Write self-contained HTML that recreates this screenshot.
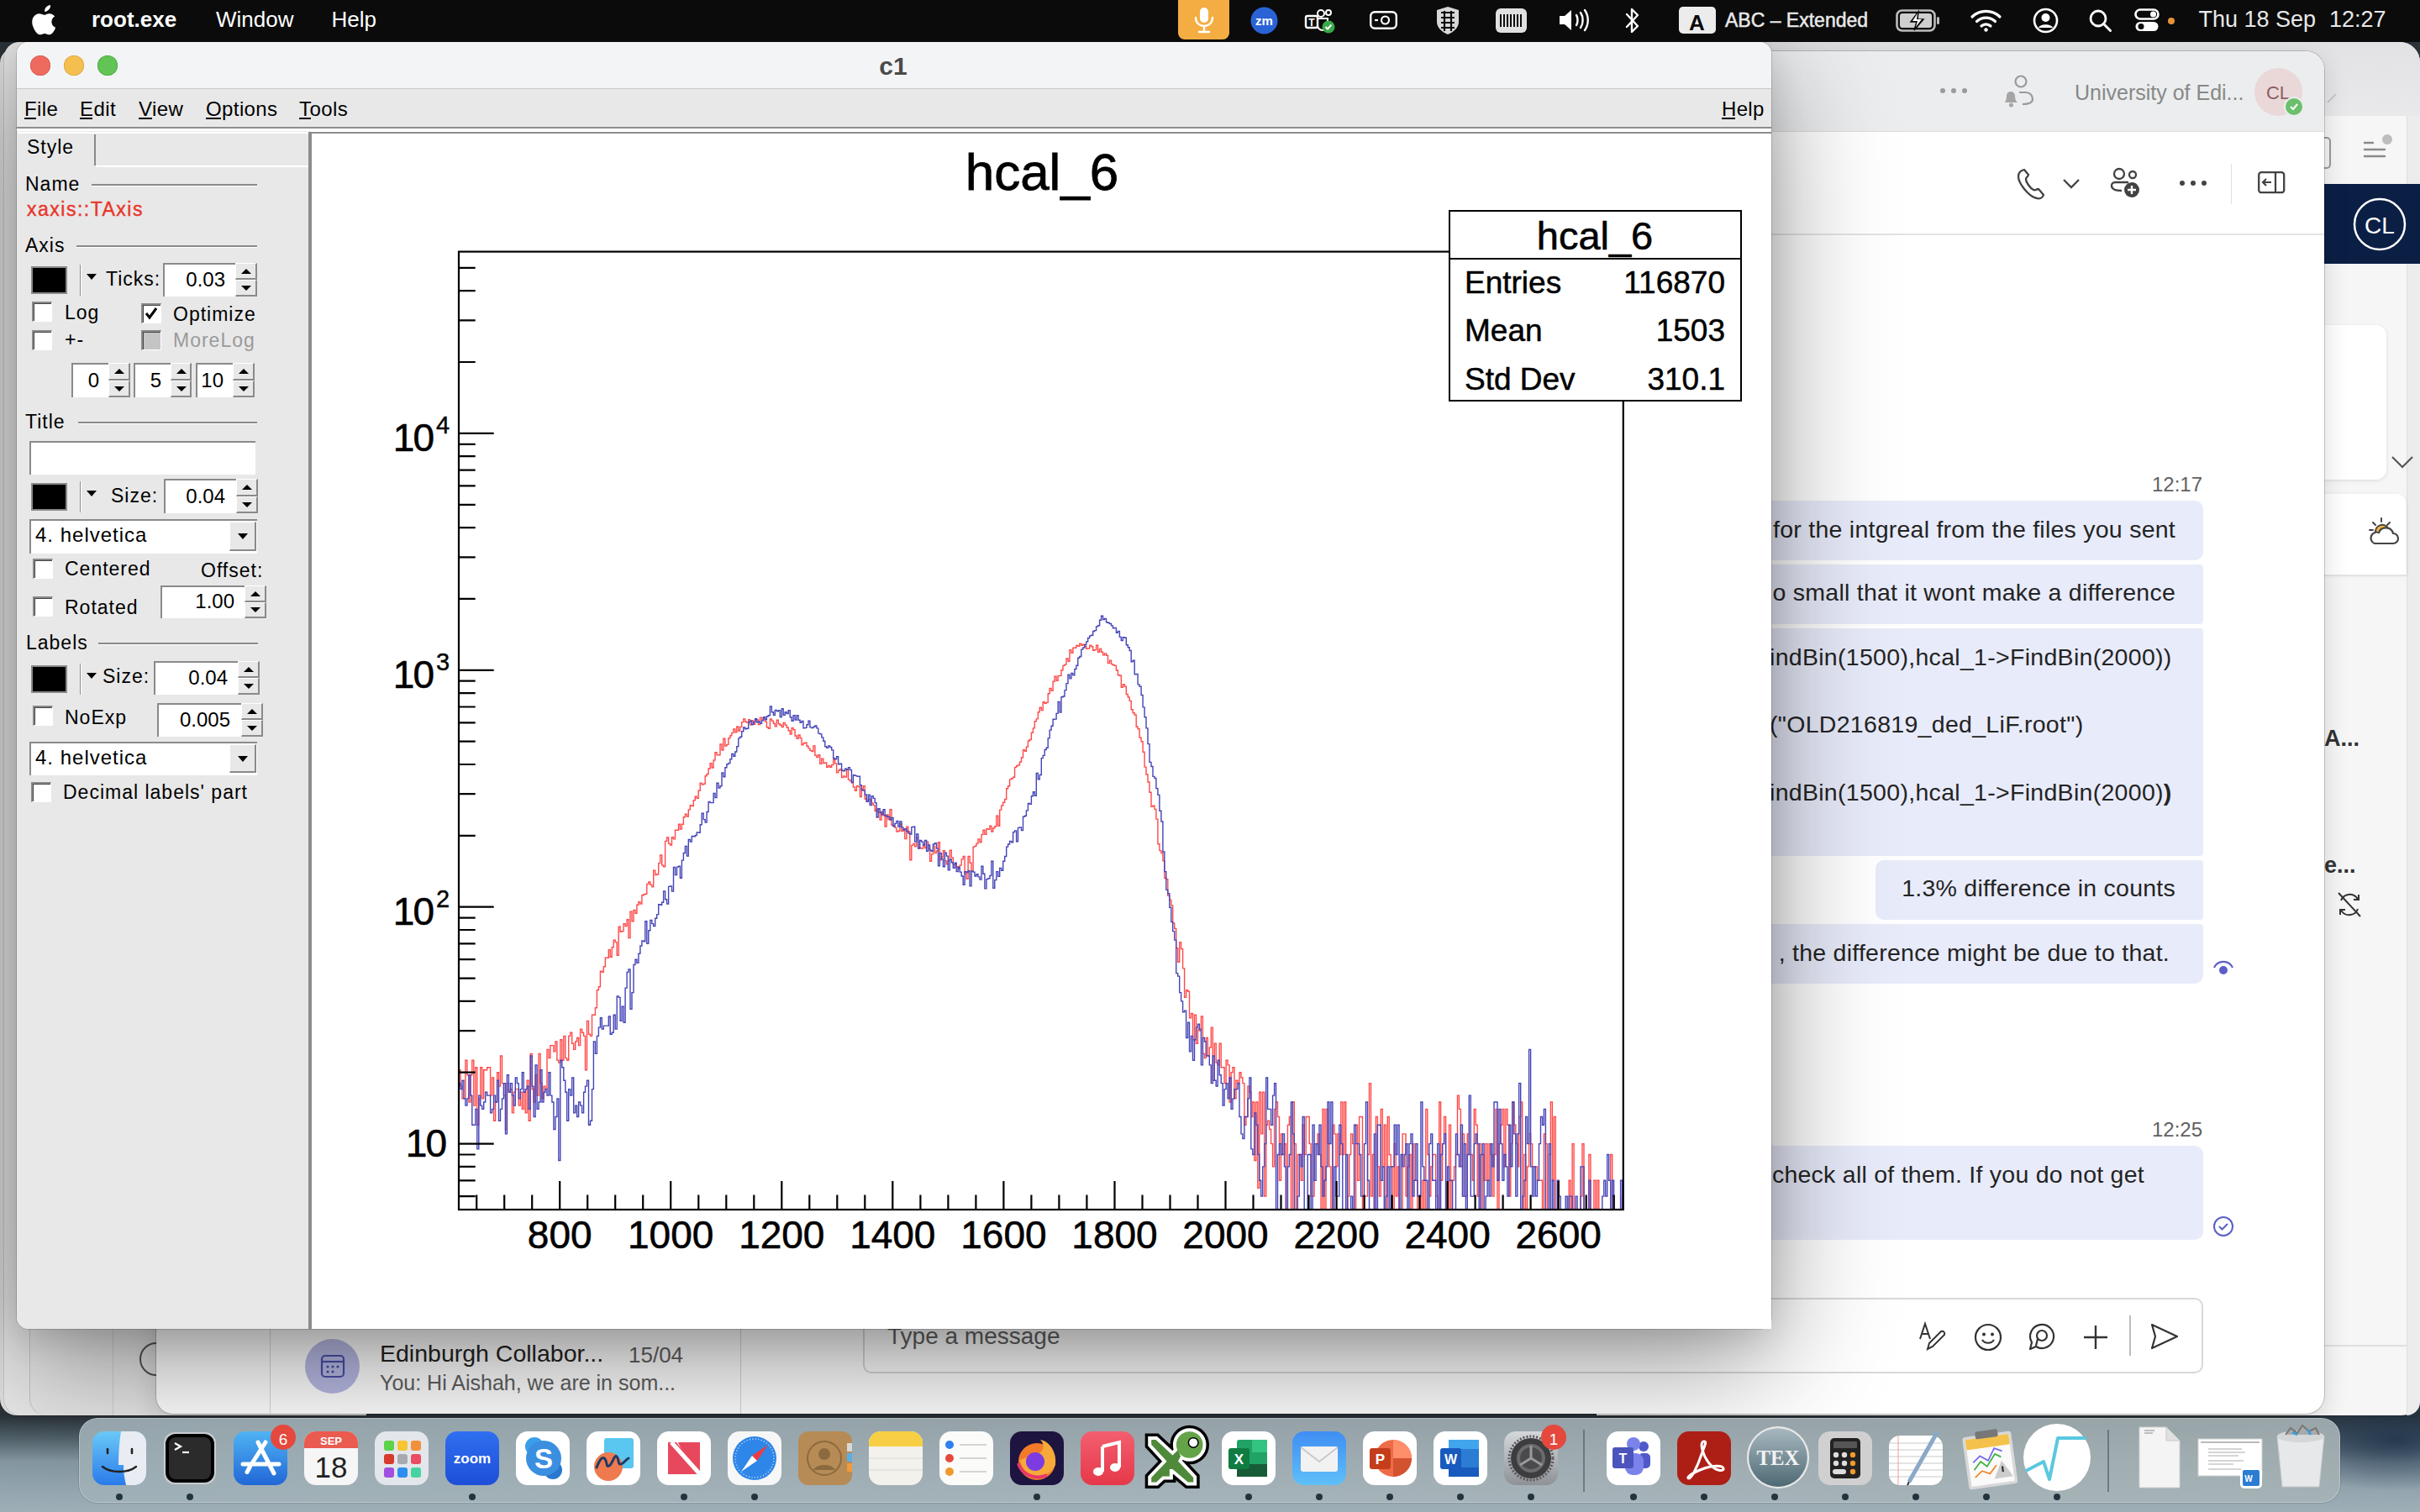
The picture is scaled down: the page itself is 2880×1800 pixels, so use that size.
<!DOCTYPE html><html><head><meta charset="utf-8"><style>
html,body{margin:0;padding:0;width:2880px;height:1800px;overflow:hidden;}
body{position:relative;font-family:"Liberation Sans", sans-serif;background:#3d4b56;}
.a{position:absolute;box-sizing:border-box;}
.t{position:absolute;white-space:nowrap;line-height:normal;}
svg{position:absolute;overflow:visible;}
</style></head><body>
<div class="a" style="left:0;top:0;width:2880px;height:1800px;background:radial-gradient(ellipse 160px 60px at 2850px 1715px,rgba(30,50,75,0.85) 0%,rgba(30,50,75,0) 100%),linear-gradient(180deg,#2b3339 0px,#2b3339 1686px,#4d5d66 1710px,#8597a1 1740px,#9eafb8 1800px);"></div>
<div class="a" style="left:0px;top:57px;width:400px;height:1628px;background:#e0e0e0;border-radius:18px 0 0 20px;box-shadow:0 0 0 1px rgba(0,0,0,0.18);"></div>
<div class="a" style="left:5px;top:50px;width:400px;height:1635px;background:#e8e8e8;border-radius:18px 0 0 20px;box-shadow:0 0 0 1px rgba(0,0,0,0.10);"></div>
<div class="a" style="left:36px;top:52px;width:400px;height:1633px;background:#e6e6e6;border-radius:18px 0 0 20px;box-shadow:-1px 0 0 rgba(0,0,0,0.15);"></div>
<div class="a" style="left:134px;top:1560px;width:1px;height:125px;background:#cfcfcf;"></div>
<div class="a" style="left:166px;top:1598px;width:40px;height:40px;border-radius:50%;border:2.5px solid #555;"></div>
<div class="a" style="left:1900px;top:50px;width:980px;height:1635px;background:#f6f6f7;border-radius:0 24px 22px 0;box-shadow:0 0 0 1px rgba(0,0,0,0.2);"></div>
<div class="a" style="left:1900px;top:50px;width:980px;height:88px;background:linear-gradient(180deg,#e2e2e4,#e9e9eb);border-radius:0 24px 0 0;"></div>
<div class="a" style="left:2864px;top:138px;width:16px;height:1547px;background:#ececec;border-left:1px solid #dedede;border-radius:0 0 22px 0;"></div>
<div class="a" style="left:2765px;top:219px;width:99px;height:95px;background:#0b1f45;"></div>
<div class="a" style="left:2864px;top:219px;width:16px;height:95px;background:#0b1f45;"></div>
<svg style="left:2800px;top:235px" width="64" height="64" viewBox="0 0 64 64"><circle cx="32" cy="32" r="30" fill="none" stroke="#fff" stroke-width="2.5"/><text x="32" y="42.5" font-size="28" font-family="Liberation Sans" fill="#fff" text-anchor="middle">CL</text></svg>
<svg style="left:2812px;top:158px" width="42" height="34" viewBox="0 0 42 34"><path d="M2 12h10M2 20h24M2 28h24" stroke="#8a8a8a" stroke-width="2.4" stroke-linecap="round"/><circle cx="29" cy="8" r="6" fill="#bdbdbd"/></svg>
<div class="a" style="left:2762px;top:163px;width:12px;height:38px;border:2.4px solid #9a9a9a;border-left:none;border-radius:0 5px 5px 0;"></div>
<svg style="left:2768px;top:108px" width="24" height="24" viewBox="0 0 24 24"><path d="M2 14L12 4" stroke="#c8c8c8" stroke-width="2"/></svg>
<div class="a" style="left:2700px;top:387px;width:140px;height:184px;background:#ffffff;border-radius:12px;box-shadow:0 1px 4px rgba(0,0,0,0.12);"></div>
<svg style="left:2845px;top:541px" width="28" height="18" viewBox="0 0 28 18"><path d="M2 3l12 12L26 3" stroke="#555" stroke-width="2.2" fill="none"/></svg>
<div class="a" style="left:2700px;top:588px;width:164px;height:96px;background:#ffffff;border-radius:12px 12px 0 0;box-shadow:0 1px 4px rgba(0,0,0,0.10);"></div>
<div class="a" style="left:2700px;top:684px;width:164px;height:2px;background:#e4e4e4;"></div>
<svg style="left:2816px;top:613px" width="40" height="40" viewBox="0 0 40 40"><path d="M18 4v4M8 9l3 3M28 9l-3 3M4 18h4" stroke="#444" stroke-width="2" stroke-linecap="round"/><path d="M11 20a8 8 0 0 1 15-4" fill="#f0b43c" stroke="#444" stroke-width="2"/><path d="M10 34h22a6 6 0 0 0 0-12 9 9 0 0 0-17-1 6.5 6.5 0 0 0-5 13z" fill="#fff" stroke="#444" stroke-width="2.2"/></svg>
<div class="t" style="left:2766.0px;top:863.6px;font-size:27px;color:#333;font-weight:bold;">A...</div>
<div class="t" style="left:2766.0px;top:1014.6px;font-size:27px;color:#333;font-weight:bold;">e...</div>
<svg style="left:2778px;top:1060px" width="36" height="34" viewBox="0 0 36 34"><path d="M8 12a11 11 0 0 1 19-3l2 2M28 22a11 11 0 0 1-19 3l-2-2" stroke="#333" stroke-width="2" fill="none"/><path d="M29 5v6h-6M7 29v-6h6" stroke="#333" stroke-width="2" fill="none"/><path d="M5 3l26 28" stroke="#333" stroke-width="2"/></svg>
<div class="a" style="left:2766px;top:1601px;width:98px;height:2px;background:#e0e0e0;"></div>
<div class="a" style="left:186px;top:61px;width:2580px;height:1622px;background:#ffffff;border-radius:20px 22px 22px 20px;box-shadow:0 0 0 1px rgba(0,0,0,0.18), 0 8px 30px rgba(0,0,0,0.15);"></div>
<div class="a" style="left:186px;top:61px;width:2580px;height:96px;background:#ebedee;border-radius:20px 22px 0 0;border-bottom:1px solid #dcdcdc;"></div>
<div class="a" style="left:186px;top:278px;width:2580px;height:2px;background:#e3e3e3;"></div>
<svg style="left:2305px;top:100px" width="40" height="16" viewBox="0 0 40 16"><circle cx="7" cy="8" r="3" fill="#9a9a9a"/><circle cx="20" cy="8" r="3" fill="#9a9a9a"/><circle cx="33" cy="8" r="3" fill="#9a9a9a"/></svg>
<svg style="left:2383px;top:88px" width="40" height="40" viewBox="0 0 40 40"><circle cx="22" cy="9" r="6.5" fill="none" stroke="#9a9a9a" stroke-width="2.2"/><path d="M20 22h8a8 8 0 0 1 8 8c0 4-4 6-12 6" stroke="#9a9a9a" stroke-width="2.2" fill="none"/><path d="M3 34h15c-2-2-3-4-3-8a5 5 0 0 0-10 0c0 4-1 6-2 8z" fill="#a5a5a5"/><circle cx="10.5" cy="37" r="2.5" fill="#a5a5a5"/></svg>
<div class="t" style="left:2469.0px;top:96.4px;font-size:25px;color:#888888;font-weight:normal;">University of Edi...</div>
<div class="a" style="left:2683px;top:81px;width:57px;height:57px;border-radius:50%;background:#ead8d9;"></div>
<div class="t" style="left:2711.0px;transform:translateX(-50%);top:98.1px;font-size:22px;color:#8a5d60;font-weight:normal;">CL</div>
<div class="a" style="left:2718px;top:115px;width:24px;height:24px;border-radius:50%;background:#6cbf6b;border:2.5px solid #ebedee;"></div>
<svg style="left:2724px;top:121px" width="12" height="12" viewBox="0 0 12 12"><path d="M2 6l3 3 5-6" stroke="#fff" stroke-width="2" fill="none"/></svg>
<svg style="left:2400px;top:200px" width="34" height="38" viewBox="0 0 34 38"><path d="M9 2c-4 1-7 4-7 8 0 8 12 24 22 26 4 1 7-1 8-4l-6-7c-2 0-4 2-6 1-4-2-9-9-9-13 0-2 3-3 3-5L9 2z" fill="none" stroke="#424242" stroke-width="2.3" stroke-linejoin="round"/></svg>
<svg style="left:2454px;top:212px" width="22" height="14" viewBox="0 0 22 14"><path d="M2 2l9 9 9-9" stroke="#424242" stroke-width="2.3" fill="none"/></svg>
<svg style="left:2511px;top:200px" width="40" height="40" viewBox="0 0 40 40"><circle cx="11" cy="7" r="6" fill="none" stroke="#424242" stroke-width="2.3"/><circle cx="27" cy="8" r="4" fill="none" stroke="#424242" stroke-width="2.3"/><path d="M22 17H6a4 4 0 0 0-4 4c0 4 4 6 12 6" stroke="#424242" stroke-width="2.3" fill="none"/><circle cx="26" cy="26" r="9" fill="#424242"/><path d="M26 21v10M21 26h10" stroke="#fff" stroke-width="2.4"/></svg>
<svg style="left:2590px;top:210px" width="40" height="16" viewBox="0 0 40 16"><circle cx="7" cy="8" r="3" fill="#424242"/><circle cx="20" cy="8" r="3" fill="#424242"/><circle cx="33" cy="8" r="3" fill="#424242"/></svg>
<div class="a" style="left:2655px;top:195px;width:1px;height:48px;background:#e0e0e0;"></div>
<svg style="left:2687px;top:204px" width="34" height="28" viewBox="0 0 34 28"><rect x="1.2" y="1.2" width="30" height="24" rx="3" fill="none" stroke="#424242" stroke-width="2.3"/><path d="M21 1v25" stroke="#424242" stroke-width="2.3"/><path d="M16 13H6M10 9l-4 4 4 4" stroke="#424242" stroke-width="2.2" fill="none"/></svg>
<div class="t" style="right:259.0px;top:563.3px;font-size:24px;color:#616161;font-weight:normal;">12:17</div>
<div class="a" style="left:1500px;top:596px;width:1122px;height:71px;background:#e8ebfa;border-radius:10px;"></div>
<div class="t" style="right:291.0px;top:613.7px;font-size:28.5px;color:#242424;font-weight:normal;letter-spacing:0.25px;">for the intgreal from the files you sent</div>
<div class="a" style="left:1500px;top:672px;width:1122px;height:71px;background:#e8ebfa;border-radius:4px;"></div>
<div class="t" style="right:291.0px;top:689.2px;font-size:28.5px;color:#242424;font-weight:normal;letter-spacing:0.25px;">o small that it wont make a difference</div>
<div class="a" style="left:1500px;top:748px;width:1122px;height:271px;background:#e8ebfa;border-radius:4px;"></div>
<div class="t" style="left:2106.0px;top:766.2px;font-size:28.5px;color:#242424;font-weight:normal;letter-spacing:0.3px;">indBin(1500),hcal_1-&gt;FindBin(2000))</div>
<div class="t" style="left:2106.0px;top:845.9px;font-size:28.5px;color:#242424;font-weight:normal;letter-spacing:0.3px;">("OLD216819_ded_LiF.root")</div>
<div class="t" style="left:2106.0px;top:927.2px;font-size:28.5px;color:#242424;font-weight:normal;letter-spacing:0.3px;">indBin(1500),hcal_1-&gt;FindBin(2000)<b>)</b></div>
<div class="a" style="left:2232px;top:1024px;width:390px;height:71px;background:#e8ebfa;border-radius:10px 4px 4px 10px;"></div>
<div class="t" style="right:291.0px;top:1041.2px;font-size:28.5px;color:#242424;font-weight:normal;letter-spacing:0.25px;">1.3% difference in counts</div>
<div class="a" style="left:1500px;top:1100px;width:1122px;height:71px;background:#e8ebfa;border-radius:4px 4px 10px 10px;"></div>
<div class="t" style="right:298.0px;top:1117.7px;font-size:28.5px;color:#242424;font-weight:normal;letter-spacing:0.25px;">, the difference might be due to that.</div>
<svg style="left:2632px;top:1140px" width="28" height="24" viewBox="0 0 28 24"><path d="M3 12a12 12 0 0 1 22 0" stroke="#5b5fc7" stroke-width="2.2" fill="none"/><circle cx="14" cy="15" r="5" fill="#5b5fc7"/></svg>
<div class="t" style="right:259.0px;top:1330.9px;font-size:24px;color:#616161;font-weight:normal;">12:25</div>
<div class="a" style="left:1500px;top:1364px;width:1122px;height:112px;background:#e8ebfa;border-radius:10px;"></div>
<div class="t" style="right:328.0px;top:1381.7px;font-size:28.5px;color:#242424;font-weight:normal;letter-spacing:0.25px;">check all of them. If you do not get</div>
<svg style="left:2633px;top:1447px" width="26" height="26" viewBox="0 0 26 26"><circle cx="13" cy="13" r="11" fill="none" stroke="#5b5fc7" stroke-width="2"/><path d="M8 13l3.5 3.5L18 10" stroke="#5b5fc7" stroke-width="2" fill="none"/></svg>
<div class="a" style="left:1027px;top:1545px;width:1595px;height:90px;background:#fff;border:2px solid #d8d8d8;border-radius:10px;"></div>
<div class="t" style="left:1056.0px;top:1575.2px;font-size:28px;color:#616161;font-weight:normal;">Type a message</div>
<svg style="left:2282px;top:1572px" width="40" height="40" viewBox="0 0 40 40"><path d="M3 22L9 4l6 18M5 16h8" stroke="#333" stroke-width="2" fill="none"/><path d="M12 34l2-7 14-14a3 3 0 0 1 4 4L18 31z" stroke="#333" stroke-width="2" fill="none"/></svg>
<svg style="left:2349px;top:1575px" width="34" height="34" viewBox="0 0 34 34"><circle cx="17" cy="17" r="15" fill="none" stroke="#333" stroke-width="2.2"/><circle cx="12" cy="13.5" r="2" fill="#333"/><circle cx="22" cy="13.5" r="2" fill="#333"/><path d="M10 20c3 5 11 5 14 0" stroke="#333" stroke-width="2.2" fill="none"/></svg>
<svg style="left:2413px;top:1575px" width="34" height="34" viewBox="0 0 34 34"><path d="M3 31l2-8a14 14 0 1 1 5 5z" fill="none" stroke="#333" stroke-width="2.2" stroke-linejoin="round"/><circle cx="17" cy="15" r="6" fill="none" stroke="#333" stroke-width="2.2"/><path d="M12 19l-2 8" stroke="#333" stroke-width="2.2"/></svg>
<svg style="left:2478px;top:1576px" width="32" height="32" viewBox="0 0 32 32"><path d="M16 2v28M2 16h28" stroke="#333" stroke-width="2.4"/></svg>
<div class="a" style="left:2534px;top:1566px;width:2px;height:48px;background:#bdbdbd;"></div>
<svg style="left:2558px;top:1574px" width="36" height="34" viewBox="0 0 36 34"><path d="M3 3l30 14L3 31l4-14z" fill="none" stroke="#333" stroke-width="2.2" stroke-linejoin="round"/></svg>
<div class="a" style="left:321px;top:1560px;width:1px;height:123px;background:#d6d6d6;"></div>
<div class="a" style="left:881px;top:1560px;width:1px;height:123px;background:#d6d6d6;"></div>
<div class="a" style="left:363px;top:1594px;width:65px;height:65px;border-radius:50%;background:#b9bbe6;"></div>
<svg style="left:381px;top:1610px" width="30" height="32" viewBox="0 0 30 32"><rect x="2" y="4" width="26" height="25" rx="4" fill="none" stroke="#4b50a8" stroke-width="2.2"/><path d="M2 11h26" stroke="#4b50a8" stroke-width="2.2"/><circle cx="9" cy="17" r="1.6" fill="#4b50a8"/><circle cx="15" cy="17" r="1.6" fill="#4b50a8"/><circle cx="21" cy="17" r="1.6" fill="#4b50a8"/><circle cx="9" cy="23" r="1.6" fill="#4b50a8"/><circle cx="15" cy="23" r="1.6" fill="#4b50a8"/></svg>
<div class="t" style="left:452.0px;top:1595.2px;font-size:28.5px;color:#242424;font-weight:normal;">Edinburgh Collabor...</div>
<div class="t" style="left:748.0px;top:1597.5px;font-size:26px;color:#616161;font-weight:normal;">15/04</div>
<div class="t" style="left:452.0px;top:1632.4px;font-size:25px;color:#616161;font-weight:normal;">You: Hi Aishah, we are in som...</div>
<div class="a" style="left:20px;top:50px;width:2088px;height:1532px;background:#ffffff;border-radius:14px;overflow:hidden;box-shadow:0 40px 140px rgba(0,0,0,0.42),0 10px 40px rgba(0,0,0,0.12),0 0 0 1px rgba(0,0,0,0.15);"></div>
<div class="a" style="left:20px;top:50px;width:2088px;height:56px;background:#f3f4f6;border-radius:14px 14px 0 0;border-bottom:1px solid #c9c9c9;"></div>
<div class="a" style="left:36px;top:66px;width:24px;height:24px;border-radius:50%;background:#ee6a5f;box-shadow:inset 0 0 0 0.8px #d65a4f;"></div>
<div class="a" style="left:76px;top:66px;width:24px;height:24px;border-radius:50%;background:#f5bf4f;box-shadow:inset 0 0 0 0.8px #d9a33c;"></div>
<div class="a" style="left:116px;top:66px;width:24px;height:24px;border-radius:50%;background:#61c454;box-shadow:inset 0 0 0 0.8px #4ea842;"></div>
<div class="t" style="left:1063.0px;transform:translateX(-50%);top:61.8px;font-size:30px;color:#4a4a4a;font-weight:bold;">c1</div>
<div class="a" style="left:20px;top:106px;width:2088px;height:46px;background:#e8e8e8;"></div>
<div class="a" style="left:20px;top:151px;width:2088px;height:2px;background:#8e8e8e;"></div>
<div class="a" style="left:20px;top:153px;width:2088px;height:3px;background:#ffffff;"></div>
<div class="t" style="left:29.0px;top:116.3px;font-size:24px;color:#000;font-weight:normal;letter-spacing:0.4px;">File</div>
<div class="a" style="left:29px;top:140px;width:14px;height:2px;background:#000;"></div>
<div class="t" style="left:95.0px;top:116.3px;font-size:24px;color:#000;font-weight:normal;letter-spacing:0.4px;">Edit</div>
<div class="a" style="left:95px;top:140px;width:15px;height:2px;background:#000;"></div>
<div class="t" style="left:165.0px;top:116.3px;font-size:24px;color:#000;font-weight:normal;letter-spacing:0.4px;">View</div>
<div class="a" style="left:165px;top:140px;width:16px;height:2px;background:#000;"></div>
<div class="t" style="left:245.0px;top:116.3px;font-size:24px;color:#000;font-weight:normal;letter-spacing:0.4px;">Options</div>
<div class="a" style="left:245px;top:140px;width:18px;height:2px;background:#000;"></div>
<div class="t" style="left:356.0px;top:116.3px;font-size:24px;color:#000;font-weight:normal;letter-spacing:0.4px;">Tools</div>
<div class="a" style="left:356px;top:140px;width:14px;height:2px;background:#000;"></div>
<div class="t" style="left:2049.0px;top:116.3px;font-size:24px;color:#000;font-weight:normal;letter-spacing:0.3px;">Help</div>
<div class="a" style="left:2049px;top:140px;width:16px;height:2px;background:#000;"></div>
<div class="a" style="left:20px;top:156px;width:350px;height:1426px;background:#e8e8e8;border-radius:0 0 0 14px;"></div>
<div class="a" style="left:21px;top:157px;width:347px;height:40px;background:#e8e8e8;border-top:2px solid #fff;"></div>
<div class="a" style="left:112px;top:160px;width:2px;height:37px;background:#8a8a8a;"></div>
<div class="a" style="left:114px;top:197px;width:254px;height:2px;background:#ffffff;"></div>
<div class="t" style="left:32.0px;top:162.2px;font-size:23px;color:#000;font-weight:normal;letter-spacing:1px;">Style</div>
<div class="a" style="left:367px;top:157px;width:4px;height:1425px;background:#8c8c8c;"></div>
<div class="t" style="left:30.0px;top:205.7px;font-size:23px;color:#000;font-weight:normal;letter-spacing:1px;">Name</div>
<div class="a" style="left:109px;top:218.5px;width:197px;height:2px;background:#8a8a8a;"></div>
<div class="a" style="left:109px;top:220.5px;width:197px;height:1px;background:#ffffff;"></div>
<div class="t" style="left:32.0px;top:236.2px;font-size:23px;color:#e8362a;font-weight:normal;letter-spacing:1.5px;-webkit-text-stroke:0.4px #e8362a;">xaxis::TAxis</div>
<div class="t" style="left:30.0px;top:279.2px;font-size:23px;color:#000;font-weight:normal;letter-spacing:1px;">Axis</div>
<div class="a" style="left:91px;top:292px;width:215px;height:2px;background:#8a8a8a;"></div>
<div class="a" style="left:91px;top:294px;width:215px;height:1px;background:#ffffff;"></div>
<div class="a" style="left:37px;top:317px;width:43px;height:33px;background:#000;border:2px solid #8a8a8a;"></div>
<div class="a" style="left:95px;top:315px;width:1px;height:37px;background:#8a8a8a;"></div>
<div class="a" style="left:96px;top:315px;width:1px;height:37px;background:#fff;"></div>
<svg style="left:103px;top:326px" width="12" height="7" viewBox="0 0 12 7"><path d="M0 0H12L6 7z" fill="#000"/></svg>
<div class="t" style="left:126.0px;top:319.2px;font-size:23px;color:#000;font-weight:normal;letter-spacing:1px;">Ticks:</div>
<div class="a" style="left:194px;top:313px;width:86px;height:40px;background:#fff;border-top:2px solid #8a8a8a;border-left:2px solid #8a8a8a;"></div>
<div class="t" style="right:2612.0px;top:319.3px;font-size:24px;color:#000;font-weight:normal;">0.03</div>
<div class="a" style="left:280px;top:313.0px;width:26px;height:20.0px;background:#e8e8e8;border-right:2px solid #8a8a8a;border-bottom:2px solid #8a8a8a;border-top:1px solid #fff;border-left:1px solid #fff;"></div>
<div class="a" style="left:280px;top:333.0px;width:26px;height:20.0px;background:#e8e8e8;border-right:2px solid #8a8a8a;border-bottom:2px solid #8a8a8a;border-top:1px solid #fff;border-left:1px solid #fff;"></div>
<svg style="left:286.0px;top:319.0px" width="14" height="8" viewBox="0 0 14 8"><path d="M7 1L13 7H1z" fill="#000"/></svg>
<svg style="left:286.0px;top:339.0px" width="14" height="8" viewBox="0 0 14 8"><path d="M1 1H13L7 7z" fill="#000"/></svg>
<div class="a" style="left:38px;top:359px;width:24px;height:24px;background:#fff;border-top:2px solid #8a8a8a;border-left:2px solid #8a8a8a;border-right:1px solid #fff;border-bottom:1px solid #fff;box-shadow:inset 1px 1px 0 #444;"></div>
<div class="t" style="left:77.0px;top:359.2px;font-size:23px;color:#000;font-weight:normal;letter-spacing:1px;">Log</div>
<div class="a" style="left:168px;top:361px;width:24px;height:24px;background:#fff;border-top:2px solid #8a8a8a;border-left:2px solid #8a8a8a;border-right:1px solid #fff;border-bottom:1px solid #fff;box-shadow:inset 1px 1px 0 #444;"></div>
<svg style="left:172px;top:365px" width="16" height="16" viewBox="0 0 16 16"><path d="M2 8l4 5 8-11" stroke="#000" stroke-width="3" fill="none"/></svg>
<div class="t" style="left:206.0px;top:360.7px;font-size:23px;color:#000;font-weight:normal;letter-spacing:1px;">Optimize</div>
<div class="a" style="left:38px;top:393px;width:24px;height:24px;background:#fff;border-top:2px solid #8a8a8a;border-left:2px solid #8a8a8a;border-right:1px solid #fff;border-bottom:1px solid #fff;box-shadow:inset 1px 1px 0 #444;"></div>
<div class="t" style="left:77.0px;top:391.2px;font-size:23px;color:#000;font-weight:normal;letter-spacing:1px;">+-</div>
<div class="a" style="left:168px;top:393px;width:24px;height:24px;background:#c4c4c4;border-top:2px solid #8a8a8a;border-left:2px solid #8a8a8a;border-right:1px solid #fff;border-bottom:1px solid #fff;box-shadow:inset 1px 1px 0 #444;"></div>
<div class="t" style="left:206.0px;top:392.2px;font-size:23px;color:#9a9a9a;font-weight:normal;letter-spacing:1px;">MoreLog</div>
<div class="a" style="left:85px;top:432px;width:44px;height:41px;background:#fff;border-top:2px solid #8a8a8a;border-left:2px solid #8a8a8a;"></div>
<div class="t" style="right:2762.0px;top:439.3px;font-size:24px;color:#000;font-weight:normal;">0</div>
<div class="a" style="left:129px;top:432.0px;width:26px;height:20.5px;background:#e8e8e8;border-right:2px solid #8a8a8a;border-bottom:2px solid #8a8a8a;border-top:1px solid #fff;border-left:1px solid #fff;"></div>
<div class="a" style="left:129px;top:452.5px;width:26px;height:20.5px;background:#e8e8e8;border-right:2px solid #8a8a8a;border-bottom:2px solid #8a8a8a;border-top:1px solid #fff;border-left:1px solid #fff;"></div>
<svg style="left:135.0px;top:438.2px" width="14" height="8" viewBox="0 0 14 8"><path d="M7 1L13 7H1z" fill="#000"/></svg>
<svg style="left:135.0px;top:458.8px" width="14" height="8" viewBox="0 0 14 8"><path d="M1 1H13L7 7z" fill="#000"/></svg>
<div class="a" style="left:159px;top:432px;width:44px;height:41px;background:#fff;border-top:2px solid #8a8a8a;border-left:2px solid #8a8a8a;"></div>
<div class="t" style="right:2688.0px;top:439.3px;font-size:24px;color:#000;font-weight:normal;">5</div>
<div class="a" style="left:203px;top:432.0px;width:25px;height:20.5px;background:#e8e8e8;border-right:2px solid #8a8a8a;border-bottom:2px solid #8a8a8a;border-top:1px solid #fff;border-left:1px solid #fff;"></div>
<div class="a" style="left:203px;top:452.5px;width:25px;height:20.5px;background:#e8e8e8;border-right:2px solid #8a8a8a;border-bottom:2px solid #8a8a8a;border-top:1px solid #fff;border-left:1px solid #fff;"></div>
<svg style="left:208.5px;top:438.2px" width="14" height="8" viewBox="0 0 14 8"><path d="M7 1L13 7H1z" fill="#000"/></svg>
<svg style="left:208.5px;top:458.8px" width="14" height="8" viewBox="0 0 14 8"><path d="M1 1H13L7 7z" fill="#000"/></svg>
<div class="a" style="left:233px;top:432px;width:44px;height:41px;background:#fff;border-top:2px solid #8a8a8a;border-left:2px solid #8a8a8a;"></div>
<div class="t" style="right:2614.0px;top:439.3px;font-size:24px;color:#000;font-weight:normal;">10</div>
<div class="a" style="left:277px;top:432.0px;width:26px;height:20.5px;background:#e8e8e8;border-right:2px solid #8a8a8a;border-bottom:2px solid #8a8a8a;border-top:1px solid #fff;border-left:1px solid #fff;"></div>
<div class="a" style="left:277px;top:452.5px;width:26px;height:20.5px;background:#e8e8e8;border-right:2px solid #8a8a8a;border-bottom:2px solid #8a8a8a;border-top:1px solid #fff;border-left:1px solid #fff;"></div>
<svg style="left:283.0px;top:438.2px" width="14" height="8" viewBox="0 0 14 8"><path d="M7 1L13 7H1z" fill="#000"/></svg>
<svg style="left:283.0px;top:458.8px" width="14" height="8" viewBox="0 0 14 8"><path d="M1 1H13L7 7z" fill="#000"/></svg>
<div class="t" style="left:30.0px;top:489.2px;font-size:23px;color:#000;font-weight:normal;letter-spacing:1px;">Title</div>
<div class="a" style="left:93px;top:502px;width:213px;height:2px;background:#8a8a8a;"></div>
<div class="a" style="left:93px;top:504px;width:213px;height:1px;background:#ffffff;"></div>
<div class="a" style="left:35px;top:525px;width:269px;height:40px;background:#fff;border-top:2px solid #8a8a8a;border-left:2px solid #8a8a8a;"></div>
<div class="a" style="left:37px;top:575px;width:43px;height:33px;background:#000;border:2px solid #8a8a8a;"></div>
<div class="a" style="left:95px;top:573px;width:1px;height:37px;background:#8a8a8a;"></div>
<div class="a" style="left:96px;top:573px;width:1px;height:37px;background:#fff;"></div>
<svg style="left:103px;top:584px" width="12" height="7" viewBox="0 0 12 7"><path d="M0 0H12L6 7z" fill="#000"/></svg>
<div class="t" style="left:132.0px;top:577.2px;font-size:23px;color:#000;font-weight:normal;letter-spacing:1px;">Size:</div>
<div class="a" style="left:195px;top:570px;width:86px;height:41px;background:#fff;border-top:2px solid #8a8a8a;border-left:2px solid #8a8a8a;"></div>
<div class="t" style="right:2612.0px;top:577.3px;font-size:24px;color:#000;font-weight:normal;">0.04</div>
<div class="a" style="left:281px;top:570.0px;width:26px;height:20.5px;background:#e8e8e8;border-right:2px solid #8a8a8a;border-bottom:2px solid #8a8a8a;border-top:1px solid #fff;border-left:1px solid #fff;"></div>
<div class="a" style="left:281px;top:590.5px;width:26px;height:20.5px;background:#e8e8e8;border-right:2px solid #8a8a8a;border-bottom:2px solid #8a8a8a;border-top:1px solid #fff;border-left:1px solid #fff;"></div>
<svg style="left:287.0px;top:576.2px" width="14" height="8" viewBox="0 0 14 8"><path d="M7 1L13 7H1z" fill="#000"/></svg>
<svg style="left:287.0px;top:596.8px" width="14" height="8" viewBox="0 0 14 8"><path d="M1 1H13L7 7z" fill="#000"/></svg>
<div class="a" style="left:35px;top:618px;width:271px;height:41px;background:#fff;border-top:2px solid #8a8a8a;border-left:2px solid #8a8a8a;"></div>
<div class="t" style="left:42.0px;top:623.3px;font-size:24px;color:#000;font-weight:normal;letter-spacing:1px;">4. helvetica</div>
<div class="a" style="left:273px;top:621px;width:32px;height:35px;background:#e8e8e8;border:1px solid #fff;border-right:2px solid #8a8a8a;border-bottom:2px solid #8a8a8a;"></div>
<svg style="left:283px;top:635px" width="12" height="7" viewBox="0 0 12 7"><path d="M0 0H12L6 7z" fill="#000"/></svg>
<div class="a" style="left:39px;top:665px;width:24px;height:24px;background:#fff;border-top:2px solid #8a8a8a;border-left:2px solid #8a8a8a;border-right:1px solid #fff;border-bottom:1px solid #fff;box-shadow:inset 1px 1px 0 #444;"></div>
<div class="t" style="left:77.0px;top:664.2px;font-size:23px;color:#000;font-weight:normal;letter-spacing:1px;">Centered</div>
<div class="t" style="left:239.0px;top:666.2px;font-size:23px;color:#000;font-weight:normal;letter-spacing:1px;">Offset:</div>
<div class="a" style="left:39px;top:710px;width:24px;height:24px;background:#fff;border-top:2px solid #8a8a8a;border-left:2px solid #8a8a8a;border-right:1px solid #fff;border-bottom:1px solid #fff;box-shadow:inset 1px 1px 0 #444;"></div>
<div class="t" style="left:77.0px;top:710.2px;font-size:23px;color:#000;font-weight:normal;letter-spacing:1px;">Rotated</div>
<div class="a" style="left:191px;top:697px;width:100px;height:39px;background:#fff;border-top:2px solid #8a8a8a;border-left:2px solid #8a8a8a;"></div>
<div class="t" style="right:2601.0px;top:702.3px;font-size:24px;color:#000;font-weight:normal;">1.00</div>
<div class="a" style="left:291px;top:697.0px;width:26px;height:19.5px;background:#e8e8e8;border-right:2px solid #8a8a8a;border-bottom:2px solid #8a8a8a;border-top:1px solid #fff;border-left:1px solid #fff;"></div>
<div class="a" style="left:291px;top:716.5px;width:26px;height:19.5px;background:#e8e8e8;border-right:2px solid #8a8a8a;border-bottom:2px solid #8a8a8a;border-top:1px solid #fff;border-left:1px solid #fff;"></div>
<svg style="left:297.0px;top:702.8px" width="14" height="8" viewBox="0 0 14 8"><path d="M7 1L13 7H1z" fill="#000"/></svg>
<svg style="left:297.0px;top:722.2px" width="14" height="8" viewBox="0 0 14 8"><path d="M1 1H13L7 7z" fill="#000"/></svg>
<div class="t" style="left:31.0px;top:752.2px;font-size:23px;color:#000;font-weight:normal;letter-spacing:1px;">Labels</div>
<div class="a" style="left:117px;top:765px;width:190px;height:2px;background:#8a8a8a;"></div>
<div class="a" style="left:117px;top:767px;width:190px;height:1px;background:#ffffff;"></div>
<div class="a" style="left:37px;top:792px;width:43px;height:33px;background:#000;border:2px solid #8a8a8a;"></div>
<div class="a" style="left:95px;top:790px;width:1px;height:37px;background:#8a8a8a;"></div>
<div class="a" style="left:96px;top:790px;width:1px;height:37px;background:#fff;"></div>
<svg style="left:103px;top:801px" width="12" height="7" viewBox="0 0 12 7"><path d="M0 0H12L6 7z" fill="#000"/></svg>
<div class="t" style="left:122.0px;top:792.2px;font-size:23px;color:#000;font-weight:normal;letter-spacing:1px;">Size:</div>
<div class="a" style="left:183px;top:787px;width:100px;height:40px;background:#fff;border-top:2px solid #8a8a8a;border-left:2px solid #8a8a8a;"></div>
<div class="t" style="right:2609.0px;top:793.3px;font-size:24px;color:#000;font-weight:normal;">0.04</div>
<div class="a" style="left:283px;top:787.0px;width:26px;height:20.0px;background:#e8e8e8;border-right:2px solid #8a8a8a;border-bottom:2px solid #8a8a8a;border-top:1px solid #fff;border-left:1px solid #fff;"></div>
<div class="a" style="left:283px;top:807.0px;width:26px;height:20.0px;background:#e8e8e8;border-right:2px solid #8a8a8a;border-bottom:2px solid #8a8a8a;border-top:1px solid #fff;border-left:1px solid #fff;"></div>
<svg style="left:289.0px;top:793.0px" width="14" height="8" viewBox="0 0 14 8"><path d="M7 1L13 7H1z" fill="#000"/></svg>
<svg style="left:289.0px;top:813.0px" width="14" height="8" viewBox="0 0 14 8"><path d="M1 1H13L7 7z" fill="#000"/></svg>
<div class="a" style="left:39px;top:840px;width:24px;height:24px;background:#fff;border-top:2px solid #8a8a8a;border-left:2px solid #8a8a8a;border-right:1px solid #fff;border-bottom:1px solid #fff;box-shadow:inset 1px 1px 0 #444;"></div>
<div class="t" style="left:77.0px;top:841.2px;font-size:23px;color:#000;font-weight:normal;letter-spacing:1px;">NoExp</div>
<div class="a" style="left:187px;top:837px;width:100px;height:40px;background:#fff;border-top:2px solid #8a8a8a;border-left:2px solid #8a8a8a;"></div>
<div class="t" style="right:2606.0px;top:843.3px;font-size:24px;color:#000;font-weight:normal;">0.005</div>
<div class="a" style="left:287px;top:837.0px;width:26px;height:20.0px;background:#e8e8e8;border-right:2px solid #8a8a8a;border-bottom:2px solid #8a8a8a;border-top:1px solid #fff;border-left:1px solid #fff;"></div>
<div class="a" style="left:287px;top:857.0px;width:26px;height:20.0px;background:#e8e8e8;border-right:2px solid #8a8a8a;border-bottom:2px solid #8a8a8a;border-top:1px solid #fff;border-left:1px solid #fff;"></div>
<svg style="left:293.0px;top:843.0px" width="14" height="8" viewBox="0 0 14 8"><path d="M7 1L13 7H1z" fill="#000"/></svg>
<svg style="left:293.0px;top:863.0px" width="14" height="8" viewBox="0 0 14 8"><path d="M1 1H13L7 7z" fill="#000"/></svg>
<div class="a" style="left:35px;top:883px;width:271px;height:40px;background:#fff;border-top:2px solid #8a8a8a;border-left:2px solid #8a8a8a;"></div>
<div class="t" style="left:42.0px;top:888.3px;font-size:24px;color:#000;font-weight:normal;letter-spacing:1px;">4. helvetica</div>
<div class="a" style="left:273px;top:886px;width:32px;height:34px;background:#e8e8e8;border:1px solid #fff;border-right:2px solid #8a8a8a;border-bottom:2px solid #8a8a8a;"></div>
<svg style="left:283px;top:900px" width="12" height="7" viewBox="0 0 12 7"><path d="M0 0H12L6 7z" fill="#000"/></svg>
<div class="a" style="left:37px;top:931px;width:24px;height:24px;background:#fff;border-top:2px solid #8a8a8a;border-left:2px solid #8a8a8a;border-right:1px solid #fff;border-bottom:1px solid #fff;box-shadow:inset 1px 1px 0 #444;"></div>
<div class="t" style="left:75.0px;top:930.2px;font-size:23px;color:#000;font-weight:normal;letter-spacing:1px;">Decimal labels' part</div>
<div class="a" style="left:371px;top:157px;width:1737px;height:1425px;background:#ffffff;border-top:2px solid #8c8c8c;"></div>
<svg style="left:0;top:0" width="2880" height="1800" viewBox="0 0 2880 1800"><defs><clipPath id="fr"><rect x="546" y="299.6" width="1385.8" height="1140.4"/></clipPath></defs><g clip-path="url(#fr)" fill="none" stroke-width="1.4" stroke-linejoin="miter"><path d="M546.0 1273.7V1273.7 H548.0V1293.1 H550.0V1307.9 H551.9V1307.9 H553.9V1262.3 H555.9V1279.8 H557.9V1312.0 H559.9V1279.8 H561.8V1262.3 H563.8V1316.1 H565.8V1270.8 H567.8V1339.3 H569.8V1307.9 H571.7V1270.8 H573.7V1307.9 H575.7V1273.7 H577.7V1273.7 H579.7V1270.8 H581.7V1270.8 H583.6V1304.1 H585.6V1283.0 H587.6V1334.3 H589.6V1312.0 H591.6V1276.7 H593.5V1293.1 H595.5V1257.0 H597.5V1289.6 H599.5V1304.1 H601.5V1344.5 H603.4V1289.6 H605.4V1300.3 H607.4V1296.6 H609.4V1324.9 H611.4V1300.3 H613.3V1296.6 H615.3V1296.6 H617.3V1316.1 H619.3V1300.3 H621.3V1320.4 H623.2V1300.3 H625.2V1324.9 H627.2V1286.3 H629.2V1334.3 H631.2V1254.4 H633.2V1296.6 H635.1V1312.0 H637.1V1279.8 H639.1V1304.1 H641.1V1254.4 H643.1V1289.6 H645.0V1307.9 H647.0V1293.1 H649.0V1296.6 H651.0V1249.4 H653.0V1259.6 H654.9V1244.6 H656.9V1244.6 H658.9V1251.9 H660.9V1240.0 H662.9V1262.3 H664.8V1265.1 H666.8V1237.8 H668.8V1262.3 H670.8V1233.4 H672.8V1259.6 H674.7V1262.3 H676.7V1233.4 H678.7V1229.2 H680.7V1242.3 H682.7V1249.4 H684.7V1240.0 H686.6V1235.5 H688.6V1244.6 H690.6V1225.1 H692.6V1229.2 H694.6V1233.4 H696.5V1273.7 H698.5V1215.4 H700.5V1231.3 H702.5V1233.4 H704.5V1208.2 H706.4V1208.2 H708.4V1199.8 H710.4V1178.8 H712.4V1174.8 H714.4V1156.3 H716.3V1157.4 H718.3V1150.7 H720.3V1140.2 H722.3V1140.2 H724.3V1130.6 H726.2V1139.2 H728.2V1127.8 H730.2V1119.1 H732.2V1121.6 H734.2V1137.2 H736.2V1103.3 H738.1V1109.3 H740.1V1108.6 H742.1V1099.6 H744.1V1102.5 H746.1V1094.7 H748.0V1116.6 H750.0V1085.3 H752.0V1096.7 H754.0V1083.4 H756.0V1087.3 H757.9V1077.3 H759.9V1073.7 H761.9V1076.1 H763.9V1065.8 H765.9V1064.7 H767.8V1064.2 H769.8V1052.4 H771.8V1050.0 H773.8V1053.4 H775.8V1055.9 H777.7V1036.3 H779.7V1041.6 H781.7V1040.7 H783.7V1027.6 H785.7V1018.0 H787.7V1030.1 H789.6V1031.7 H791.6V1001.4 H793.6V997.0 H795.6V1004.4 H797.6V1006.0 H799.5V996.7 H801.5V998.9 H803.5V988.3 H805.5V988.3 H807.5V981.2 H809.4V987.1 H811.4V981.2 H813.4V972.8 H815.4V969.2 H817.4V972.0 H819.3V963.9 H821.3V958.8 H823.3V959.5 H825.3V952.8 H827.3V948.1 H829.2V950.2 H831.2V941.2 H833.2V932.1 H835.2V934.1 H837.2V933.2 H839.2V923.7 H841.1V921.5 H843.1V915.0 H845.1V908.6 H847.1V914.0 H849.1V905.0 H851.0V895.7 H853.0V898.9 H855.0V898.7 H857.0V885.9 H859.0V893.1 H860.9V879.3 H862.9V888.0 H864.9V886.4 H866.9V878.7 H868.9V875.8 H870.8V872.4 H872.8V868.0 H874.8V871.8 H876.8V865.0 H878.8V870.4 H880.7V865.4 H882.7V859.6 H884.7V855.9 H886.7V859.2 H888.7V860.1 H890.7V856.7 H892.6V862.8 H894.6V858.0 H896.6V862.3 H898.6V856.8 H900.6V857.0 H902.5V862.6 H904.5V854.1 H906.5V856.9 H908.5V854.2 H910.5V859.1 H912.4V865.8 H914.4V867.4 H916.4V856.0 H918.4V858.2 H920.4V861.3 H922.3V864.9 H924.3V857.2 H926.3V861.8 H928.3V863.2 H930.3V865.5 H932.2V860.5 H934.2V863.1 H936.2V866.0 H938.2V869.8 H940.2V874.0 H942.1V866.6 H944.1V868.7 H946.1V876.0 H948.1V879.3 H950.1V875.0 H952.1V878.6 H954.0V886.8 H956.0V884.8 H958.0V884.3 H960.0V888.2 H962.0V890.9 H963.9V893.4 H965.9V894.5 H967.9V887.9 H969.9V899.3 H971.9V901.6 H973.8V898.6 H975.8V909.4 H977.8V903.1 H979.8V908.6 H981.8V907.9 H983.7V913.2 H985.7V911.4 H987.7V913.2 H989.7V910.6 H991.7V904.0 H993.6V908.9 H995.6V919.9 H997.6V917.2 H999.6V915.6 H1001.6V925.6 H1003.6V923.9 H1005.5V925.1 H1007.5V916.4 H1009.5V928.1 H1011.5V929.9 H1013.5V931.7 H1015.4V937.1 H1017.4V941.2 H1019.4V935.6 H1021.4V936.5 H1023.4V948.5 H1025.3V939.4 H1027.3V935.6 H1029.3V951.3 H1031.3V954.3 H1033.3V951.9 H1035.2V952.3 H1037.2V956.3 H1039.2V958.6 H1041.2V965.6 H1043.2V963.4 H1045.1V967.0 H1047.1V976.1 H1049.1V966.1 H1051.1V970.7 H1053.1V984.0 H1055.1V970.0 H1057.0V975.6 H1059.0V963.7 H1061.0V982.3 H1063.0V983.4 H1065.0V985.4 H1066.9V990.0 H1068.9V989.2 H1070.9V980.7 H1072.9V989.5 H1074.9V987.4 H1076.8V998.6 H1078.8V984.3 H1080.8V990.0 H1082.8V1023.7 H1084.8V1006.4 H1086.7V1004.4 H1088.7V1007.7 H1090.7V997.0 H1092.7V1009.5 H1094.7V1009.5 H1096.6V1010.1 H1098.6V1006.7 H1100.6V1009.5 H1102.6V1002.1 H1104.6V1010.1 H1106.6V1025.3 H1108.5V1016.9 H1110.5V1007.4 H1112.5V1015.5 H1114.5V1012.9 H1116.5V1002.7 H1118.4V1023.7 H1120.4V1020.3 H1122.4V1012.6 H1124.4V1024.9 H1126.4V1028.8 H1128.3V1024.9 H1130.3V1012.2 H1132.3V1021.0 H1134.3V1028.8 H1136.3V1028.4 H1138.2V1031.7 H1140.2V1034.2 H1142.2V1030.1 H1144.2V1022.9 H1146.2V1019.5 H1148.1V1039.8 H1150.1V1046.2 H1152.1V1019.5 H1154.1V1027.2 H1156.1V1037.2 H1158.1V1008.1 H1160.0V1007.1 H1162.0V1004.1 H1164.0V998.9 H1166.0V1002.7 H1168.0V993.6 H1169.9V988.3 H1171.9V993.3 H1173.9V986.6 H1175.9V987.4 H1177.9V983.2 H1179.8V990.0 H1181.8V985.7 H1183.8V983.7 H1185.8V971.2 H1187.8V983.4 H1189.7V964.1 H1191.7V959.0 H1193.7V955.2 H1195.7V951.5 H1197.7V938.8 H1199.6V935.8 H1201.6V927.9 H1203.6V926.7 H1205.6V925.3 H1207.6V913.4 H1209.6V911.8 H1211.5V910.9 H1213.5V907.0 H1215.5V902.0 H1217.5V892.7 H1219.5V894.3 H1221.4V889.1 H1223.4V882.0 H1225.4V880.5 H1227.4V872.3 H1229.4V866.9 H1231.3V858.7 H1233.3V855.9 H1235.3V847.7 H1237.3V842.2 H1239.3V845.6 H1241.2V835.7 H1243.2V837.2 H1245.2V836.4 H1247.2V825.7 H1249.2V819.4 H1251.1V822.4 H1253.1V811.2 H1255.1V805.3 H1257.1V810.3 H1259.1V804.6 H1261.1V804.4 H1263.0V797.7 H1265.0V792.4 H1267.0V791.1 H1269.0V784.0 H1271.0V787.4 H1272.9V773.6 H1274.9V777.4 H1276.9V771.2 H1278.9V771.2 H1280.9V768.4 H1282.8V769.2 H1284.8V766.2 H1286.8V768.2 H1288.8V767.2 H1290.8V769.6 H1292.7V772.4 H1294.7V772.1 H1296.7V768.1 H1298.7V769.7 H1300.7V774.3 H1302.6V773.6 H1304.6V768.3 H1306.6V776.3 H1308.6V772.4 H1310.6V776.3 H1312.6V779.9 H1314.5V777.9 H1316.5V780.2 H1318.5V789.6 H1320.5V786.3 H1322.5V790.6 H1324.4V791.8 H1326.4V792.4 H1328.4V798.0 H1330.4V803.7 H1332.4V804.2 H1334.3V818.3 H1336.3V814.7 H1338.3V817.3 H1340.3V826.5 H1342.3V830.0 H1344.2V834.4 H1346.2V844.8 H1348.2V848.8 H1350.2V851.0 H1352.2V865.2 H1354.1V867.8 H1356.1V878.3 H1358.1V882.7 H1360.1V895.2 H1362.1V913.1 H1364.0V922.0 H1366.0V931.0 H1368.0V943.2 H1370.0V960.4 H1372.0V959.2 H1374.0V963.4 H1375.9V975.1 H1377.9V1004.7 H1379.9V1012.6 H1381.9V1015.5 H1383.9V1024.9 H1385.8V1045.2 H1387.8V1046.6 H1389.8V1066.4 H1391.8V1071.4 H1393.8V1077.9 H1395.7V1098.9 H1397.7V1105.5 H1399.7V1128.7 H1401.7V1145.3 H1403.7V1121.6 H1405.6V1129.6 H1407.6V1152.9 H1409.6V1187.4 H1411.6V1178.8 H1413.6V1180.2 H1415.5V1211.8 H1417.5V1206.5 H1419.5V1237.8 H1421.5V1208.2 H1423.5V1242.3 H1425.5V1225.1 H1427.4V1227.1 H1429.4V1210.0 H1431.4V1254.4 H1433.4V1259.6 H1435.4V1235.5 H1437.3V1257.0 H1439.3V1247.0 H1441.3V1223.1 H1443.3V1286.3 H1445.3V1242.3 H1447.2V1265.1 H1449.2V1267.9 H1451.2V1242.3 H1453.2V1270.8 H1455.2V1270.8 H1457.1V1289.6 H1459.1V1262.3 H1461.1V1267.9 H1463.1V1312.0 H1465.1V1276.7 H1467.0V1270.8 H1469.0V1307.9 H1471.0V1286.3 H1473.0V1289.6 H1475.0V1276.7 H1477.0V1283.0 H1478.9V1289.6 H1480.9V1339.3 H1482.9V1329.5 H1484.9V1293.1 H1486.9V1300.3 H1488.8V1329.5 H1490.8V1312.0 H1492.8V1381.5 H1494.8V1312.0 H1496.8V1414.3 H1498.7V1300.3 H1500.7V1349.9 H1502.7V1300.3 H1504.7V1424.1 H1506.7V1339.3 H1508.6V1334.3 H1510.6V1344.5 H1512.6V1361.6 H1514.6V1388.9 H1516.6V1320.4 H1518.5V1312.0 H1520.5V1329.5 H1522.5V1405.3 H1524.5V1349.9 H1526.5V1374.5 H1528.5V1361.6 H1530.4V1440.0 H1532.4V1339.3 H1534.4V1329.5 H1536.4V1440.0 H1538.4V1312.0 H1540.3V1361.6 H1542.3V1440.0 H1544.3V1374.5 H1546.3V1374.5 H1548.3V1405.3 H1550.2V1339.3 H1552.2V1374.5 H1554.2V1329.5 H1556.2V1329.5 H1558.2V1361.6 H1560.1V1424.1 H1562.1V1424.1 H1564.1V1361.6 H1566.1V1361.6 H1568.1V1349.9 H1570.0V1374.5 H1572.0V1440.0 H1574.0V1320.4 H1576.0V1440.0 H1578.0V1320.4 H1580.0V1361.6 H1581.9V1388.9 H1583.9V1440.0 H1585.9V1339.3 H1587.9V1349.9 H1589.9V1388.9 H1591.8V1349.9 H1593.8V1374.5 H1595.8V1312.0 H1597.8V1374.5 H1599.8V1312.0 H1601.7V1440.0 H1603.7V1424.1 H1605.7V1374.5 H1607.7V1349.9 H1609.7V1361.6 H1611.6V1440.0 H1613.6V1339.3 H1615.6V1405.3 H1617.6V1329.5 H1619.6V1329.5 H1621.5V1440.0 H1623.5V1424.1 H1625.5V1424.1 H1627.5V1374.5 H1629.5V1289.6 H1631.5V1424.1 H1633.4V1374.5 H1635.4V1440.0 H1637.4V1329.5 H1639.4V1388.9 H1641.4V1424.1 H1643.3V1320.4 H1645.3V1388.9 H1647.3V1339.3 H1649.3V1440.0 H1651.3V1329.5 H1653.2V1374.5 H1655.2V1388.9 H1657.2V1440.0 H1659.2V1361.6 H1661.2V1424.1 H1663.1V1388.9 H1665.1V1440.0 H1667.1V1440.0 H1669.1V1349.9 H1671.1V1349.9 H1673.0V1424.1 H1675.0V1388.9 H1677.0V1374.5 H1679.0V1440.0 H1681.0V1361.6 H1683.0V1405.3 H1684.9V1405.3 H1686.9V1440.0 H1688.9V1424.1 H1690.9V1440.0 H1692.9V1405.3 H1694.8V1440.0 H1696.8V1320.4 H1698.8V1374.5 H1700.8V1424.1 H1702.8V1388.9 H1704.7V1374.5 H1706.7V1374.5 H1708.7V1424.1 H1710.7V1440.0 H1712.7V1312.0 H1714.6V1405.3 H1716.6V1361.6 H1718.6V1329.5 H1720.6V1440.0 H1722.6V1440.0 H1724.5V1339.3 H1726.5V1440.0 H1728.5V1405.3 H1730.5V1388.9 H1732.5V1374.5 H1734.5V1304.1 H1736.4V1320.4 H1738.4V1388.9 H1740.4V1349.9 H1742.4V1424.1 H1744.4V1424.1 H1746.3V1349.9 H1748.3V1374.5 H1750.3V1374.5 H1752.3V1405.3 H1754.3V1320.4 H1756.2V1339.3 H1758.2V1424.1 H1760.2V1361.6 H1762.2V1440.0 H1764.2V1374.5 H1766.1V1405.3 H1768.1V1361.6 H1770.1V1405.3 H1772.1V1361.6 H1774.1V1374.5 H1776.0V1424.1 H1778.0V1374.5 H1780.0V1320.4 H1782.0V1440.0 H1784.0V1361.6 H1785.9V1339.3 H1787.9V1320.4 H1789.9V1388.9 H1791.9V1320.4 H1793.9V1339.3 H1795.9V1424.1 H1797.8V1361.6 H1799.8V1312.0 H1801.8V1339.3 H1803.8V1361.6 H1805.8V1388.9 H1807.7V1329.5 H1809.7V1312.0 H1811.7V1440.0 H1813.7V1374.5 H1815.7V1440.0 H1817.6V1388.9 H1819.6V1349.9 H1821.6V1361.6 H1823.6V1388.9 H1825.6V1388.9 H1827.5V1388.9 H1829.5V1405.3 H1831.5V1405.3 H1833.5V1405.3 H1835.5V1440.0 H1837.4V1349.9 H1839.4V1361.6 H1841.4V1440.0 H1843.4V1374.5 H1845.4V1312.0 H1847.4V1405.3 H1849.3V1329.5 H1851.3V1440.0 H1853.3V1440.0 H1855.3V1440.0 H1857.3V1440.0 H1859.2V1440.0 H1861.2V1440.0 H1863.2V1440.0 H1865.2V1440.0 H1867.2V1405.3 H1869.1V1440.0 H1871.1V1361.6 H1873.1V1440.0 H1875.1V1440.0 H1877.1V1440.0 H1879.0V1440.0 H1881.0V1424.1 H1883.0V1361.6 H1885.0V1440.0 H1887.0V1440.0 H1888.9V1440.0 H1890.9V1374.5 H1892.9V1440.0 H1894.9V1440.0 H1896.9V1405.3 H1898.9V1440.0 H1900.8V1405.3 H1902.8V1440.0 H1904.8V1440.0 H1906.8V1440.0 H1908.8V1440.0 H1910.7V1440.0 H1912.7V1440.0 H1914.7V1440.0 H1916.7V1374.5 H1918.7V1424.1 H1920.6V1440.0 H1922.6V1440.0 H1924.6V1440.0 H1926.6V1440.0 H1928.6V1440.0 H1930.5V1424.1 H1931.8" stroke="#ff4a4a"/><path d="M546.0 1289.6V1289.6 H548.0V1296.6 H550.0V1286.3 H551.9V1307.9 H553.9V1316.1 H555.9V1307.9 H557.9V1279.8 H559.9V1304.1 H561.8V1339.3 H563.8V1339.3 H565.8V1320.4 H567.8V1367.9 H569.8V1304.1 H571.7V1316.1 H573.7V1320.4 H575.7V1312.0 H577.7V1300.3 H579.7V1304.1 H581.7V1304.1 H583.6V1324.9 H585.6V1320.4 H587.6V1304.1 H589.6V1312.0 H591.6V1286.3 H593.5V1334.3 H595.5V1320.4 H597.5V1307.9 H599.5V1289.6 H601.5V1349.9 H603.4V1279.8 H605.4V1300.3 H607.4V1289.6 H609.4V1304.1 H611.4V1316.1 H613.3V1283.0 H615.3V1289.6 H617.3V1307.9 H619.3V1296.6 H621.3V1276.7 H623.2V1300.3 H625.2V1296.6 H627.2V1293.1 H629.2V1320.4 H631.2V1257.0 H633.2V1293.1 H635.1V1329.5 H637.1V1267.9 H639.1V1320.4 H641.1V1312.0 H643.1V1273.7 H645.0V1312.0 H647.0V1300.3 H649.0V1296.6 H651.0V1304.1 H653.0V1276.7 H654.9V1304.1 H656.9V1312.0 H658.9V1344.5 H660.9V1329.5 H662.9V1307.9 H664.8V1381.5 H666.8V1262.3 H668.8V1270.8 H670.8V1286.3 H672.8V1300.3 H674.7V1334.3 H676.7V1296.6 H678.7V1304.1 H680.7V1283.0 H682.7V1324.9 H684.7V1316.1 H686.6V1329.5 H688.6V1312.0 H690.6V1316.1 H692.6V1324.9 H694.6V1300.3 H696.5V1293.1 H698.5V1286.3 H700.5V1339.3 H702.5V1334.3 H704.5V1296.6 H706.4V1240.0 H708.4V1254.4 H710.4V1233.4 H712.4V1223.1 H714.4V1211.8 H716.3V1225.1 H718.3V1221.1 H720.3V1221.1 H722.3V1221.1 H724.3V1210.0 H726.2V1231.3 H728.2V1229.2 H730.2V1208.2 H732.2V1225.1 H734.2V1185.9 H736.2V1187.4 H738.1V1215.4 H740.1V1198.2 H742.1V1217.3 H744.1V1176.1 H746.1V1157.4 H748.0V1154.0 H750.0V1201.4 H752.0V1181.6 H754.0V1148.5 H756.0V1142.2 H757.9V1146.4 H759.9V1135.3 H761.9V1126.0 H763.9V1119.9 H765.9V1120.8 H767.8V1096.7 H769.8V1123.4 H771.8V1107.8 H773.8V1095.4 H775.8V1099.6 H777.7V1102.5 H779.7V1093.3 H781.7V1088.6 H783.7V1076.7 H785.7V1077.3 H787.7V1074.3 H789.6V1061.0 H791.6V1070.8 H793.6V1076.1 H795.6V1055.4 H797.6V1054.9 H799.5V1061.0 H801.5V1032.5 H803.5V1041.6 H805.5V1032.1 H807.5V1031.3 H809.4V1045.2 H811.4V1024.1 H813.4V1015.5 H815.4V1007.4 H817.4V1019.1 H819.3V999.5 H821.3V1002.1 H823.3V995.5 H825.3V995.8 H827.3V994.5 H829.2V990.9 H831.2V991.2 H833.2V981.8 H835.2V968.3 H837.2V975.6 H839.2V979.1 H841.1V966.5 H843.1V954.5 H845.1V955.6 H847.1V955.6 H849.1V944.4 H851.0V949.6 H853.0V932.2 H855.0V938.1 H857.0V935.8 H859.0V920.0 H860.9V924.8 H862.9V913.7 H864.9V909.7 H866.9V908.6 H868.9V903.7 H870.8V897.5 H872.8V900.3 H874.8V895.0 H876.8V888.8 H878.8V878.9 H880.7V877.2 H882.7V870.7 H884.7V866.0 H886.7V867.8 H888.7V867.3 H890.7V859.6 H892.6V858.3 H894.6V862.6 H896.6V859.6 H898.6V855.8 H900.6V859.8 H902.5V859.3 H904.5V861.4 H906.5V857.9 H908.5V853.7 H910.5V856.8 H912.4V852.8 H914.4V851.7 H916.4V841.0 H918.4V847.7 H920.4V851.4 H922.3V845.4 H924.3V846.7 H926.3V845.6 H928.3V853.5 H930.3V843.8 H932.2V851.4 H934.2V847.7 H936.2V849.5 H938.2V845.6 H940.2V853.8 H942.1V858.2 H944.1V851.8 H946.1V857.0 H948.1V851.6 H950.1V857.2 H952.1V860.2 H954.0V858.5 H956.0V866.9 H958.0V866.4 H960.0V862.7 H962.0V858.3 H963.9V865.9 H965.9V866.6 H967.9V865.3 H969.9V864.0 H971.9V866.9 H973.8V873.1 H975.8V873.9 H977.8V877.9 H979.8V882.3 H981.8V888.8 H983.7V890.4 H985.7V887.9 H987.7V889.5 H989.7V892.9 H991.7V902.7 H993.6V903.9 H995.6V900.8 H997.6V909.8 H999.6V909.2 H1001.6V917.2 H1003.6V917.7 H1005.5V915.3 H1007.5V916.3 H1009.5V913.6 H1011.5V916.6 H1013.5V931.5 H1015.4V922.7 H1017.4V923.4 H1019.4V924.1 H1021.4V924.2 H1023.4V934.8 H1025.3V940.6 H1027.3V941.0 H1029.3V946.0 H1031.3V954.3 H1033.3V946.2 H1035.2V958.6 H1037.2V947.7 H1039.2V950.4 H1041.2V955.9 H1043.2V973.0 H1045.1V962.7 H1047.1V967.0 H1049.1V969.7 H1051.1V963.7 H1053.1V971.0 H1055.1V972.3 H1057.0V972.5 H1059.0V976.1 H1061.0V973.5 H1063.0V983.7 H1065.0V980.4 H1066.9V977.5 H1068.9V984.0 H1070.9V978.0 H1072.9V984.9 H1074.9V988.0 H1076.8V986.6 H1078.8V989.7 H1080.8V992.1 H1082.8V993.0 H1084.8V984.6 H1086.7V984.3 H1088.7V1002.1 H1090.7V993.0 H1092.7V1010.1 H1094.7V1000.5 H1096.6V1002.1 H1098.6V1005.7 H1100.6V1000.5 H1102.6V1013.3 H1104.6V1006.0 H1106.6V1012.2 H1108.5V1013.3 H1110.5V1005.0 H1112.5V1003.7 H1114.5V1010.1 H1116.5V1030.9 H1118.4V1015.8 H1120.4V1022.5 H1122.4V1031.7 H1124.4V1015.1 H1126.4V1019.1 H1128.3V1035.9 H1130.3V1023.3 H1132.3V1026.8 H1134.3V1033.4 H1136.3V1027.2 H1138.2V1037.6 H1140.2V1032.5 H1142.2V1038.1 H1144.2V1043.0 H1146.2V1053.4 H1148.1V1037.6 H1150.1V1038.5 H1152.1V1036.8 H1154.1V1054.9 H1156.1V1037.2 H1158.1V1038.1 H1160.0V1043.0 H1162.0V1040.7 H1164.0V1043.9 H1166.0V1047.1 H1168.0V1031.3 H1169.9V1040.3 H1171.9V1057.9 H1173.9V1046.6 H1175.9V1045.7 H1177.9V1042.5 H1179.8V1025.3 H1181.8V1057.4 H1183.8V1047.6 H1185.8V1037.6 H1187.8V1043.4 H1189.7V1033.4 H1191.7V1036.3 H1193.7V1025.3 H1195.7V1019.5 H1197.7V1008.1 H1199.6V1005.0 H1201.6V1001.4 H1203.6V1002.7 H1205.6V990.6 H1207.6V988.9 H1209.6V1001.8 H1211.5V985.4 H1213.5V984.9 H1215.5V988.6 H1217.5V972.3 H1219.5V971.2 H1221.4V964.9 H1223.4V956.5 H1225.4V957.4 H1227.4V947.7 H1229.4V942.8 H1231.3V947.3 H1233.3V920.4 H1235.3V927.7 H1237.3V922.5 H1239.3V902.6 H1241.2V899.4 H1243.2V892.5 H1245.2V890.2 H1247.2V878.9 H1249.2V869.1 H1251.1V864.2 H1253.1V856.3 H1255.1V856.1 H1257.1V849.4 H1259.1V835.5 H1261.1V848.1 H1263.0V829.8 H1265.0V829.0 H1267.0V821.6 H1269.0V813.6 H1271.0V803.2 H1272.9V807.9 H1274.9V801.5 H1276.9V803.9 H1278.9V796.5 H1280.9V792.3 H1282.8V783.3 H1284.8V781.5 H1286.8V773.1 H1288.8V771.0 H1290.8V767.8 H1292.7V763.9 H1294.7V759.5 H1296.7V756.9 H1298.7V756.3 H1300.7V751.5 H1302.6V750.6 H1304.6V745.9 H1306.6V744.7 H1308.6V738.3 H1310.6V733.3 H1312.6V737.6 H1314.5V736.5 H1316.5V740.8 H1318.5V741.5 H1320.5V742.5 H1322.5V744.9 H1324.4V747.8 H1326.4V747.4 H1328.4V753.3 H1330.4V751.4 H1332.4V758.4 H1334.3V762.6 H1336.3V758.8 H1338.3V759.2 H1340.3V767.7 H1342.3V770.7 H1344.2V774.5 H1346.2V787.8 H1348.2V786.3 H1350.2V802.9 H1352.2V802.4 H1354.1V814.9 H1356.1V817.2 H1358.1V827.5 H1360.1V841.9 H1362.1V853.8 H1364.0V866.9 H1366.0V885.6 H1368.0V907.4 H1370.0V912.5 H1372.0V924.4 H1374.0V926.5 H1375.9V938.6 H1377.9V946.4 H1379.9V965.3 H1381.9V978.0 H1383.9V1014.0 H1385.8V1037.6 H1387.8V1059.4 H1389.8V1063.7 H1391.8V1080.3 H1393.8V1097.5 H1395.7V1108.6 H1397.7V1119.1 H1399.7V1158.6 H1401.7V1162.1 H1403.7V1181.6 H1405.6V1191.9 H1407.6V1204.8 H1409.6V1203.1 H1411.6V1235.5 H1413.6V1217.3 H1415.5V1251.9 H1417.5V1233.4 H1419.5V1262.3 H1421.5V1237.8 H1423.5V1223.1 H1425.5V1219.2 H1427.4V1225.1 H1429.4V1267.9 H1431.4V1235.5 H1433.4V1240.0 H1435.4V1257.0 H1437.3V1257.0 H1439.3V1267.9 H1441.3V1289.6 H1443.3V1257.0 H1445.3V1286.3 H1447.2V1293.1 H1449.2V1262.3 H1451.2V1279.8 H1453.2V1289.6 H1455.2V1316.1 H1457.1V1296.6 H1459.1V1289.6 H1461.1V1307.9 H1463.1V1283.0 H1465.1V1320.4 H1467.0V1307.9 H1469.0V1296.6 H1471.0V1296.6 H1473.0V1289.6 H1475.0V1329.5 H1477.0V1349.9 H1478.9V1355.6 H1480.9V1329.5 H1482.9V1329.5 H1484.9V1307.9 H1486.9V1283.0 H1488.8V1367.9 H1490.8V1374.5 H1492.8V1324.9 H1494.8V1339.3 H1496.8V1374.5 H1498.7V1405.3 H1500.7V1424.1 H1502.7V1388.9 H1504.7V1361.6 H1506.7V1283.0 H1508.6V1320.4 H1510.6V1320.4 H1512.6V1339.3 H1514.6V1304.1 H1516.6V1289.6 H1518.5V1440.0 H1520.5V1374.5 H1522.5V1361.6 H1524.5V1374.5 H1526.5V1349.9 H1528.5V1388.9 H1530.4V1440.0 H1532.4V1388.9 H1534.4V1374.5 H1536.4V1312.0 H1538.4V1349.9 H1540.3V1440.0 H1542.3V1440.0 H1544.3V1424.1 H1546.3V1374.5 H1548.3V1388.9 H1550.2V1329.5 H1552.2V1440.0 H1554.2V1440.0 H1556.2V1374.5 H1558.2V1374.5 H1560.1V1440.0 H1562.1V1339.3 H1564.1V1405.3 H1566.1V1361.6 H1568.1V1374.5 H1570.0V1339.3 H1572.0V1388.9 H1574.0V1424.1 H1576.0V1405.3 H1578.0V1388.9 H1580.0V1312.0 H1581.9V1361.6 H1583.9V1312.0 H1585.9V1440.0 H1587.9V1388.9 H1589.9V1424.1 H1591.8V1424.1 H1593.8V1339.3 H1595.8V1361.6 H1597.8V1440.0 H1599.8V1440.0 H1601.7V1374.5 H1603.7V1440.0 H1605.7V1440.0 H1607.7V1424.1 H1609.7V1440.0 H1611.6V1339.3 H1613.6V1361.6 H1615.6V1361.6 H1617.6V1374.5 H1619.6V1424.1 H1621.5V1424.1 H1623.5V1361.6 H1625.5V1312.0 H1627.5V1405.3 H1629.5V1440.0 H1631.5V1440.0 H1633.4V1440.0 H1635.4V1349.9 H1637.4V1440.0 H1639.4V1339.3 H1641.4V1339.3 H1643.3V1405.3 H1645.3V1388.9 H1647.3V1440.0 H1649.3V1424.1 H1651.3V1388.9 H1653.2V1440.0 H1655.2V1388.9 H1657.2V1388.9 H1659.2V1339.3 H1661.2V1374.5 H1663.1V1339.3 H1665.1V1440.0 H1667.1V1374.5 H1669.1V1388.9 H1671.1V1374.5 H1673.0V1361.6 H1675.0V1440.0 H1677.0V1361.6 H1679.0V1349.9 H1681.0V1424.1 H1683.0V1405.3 H1684.9V1361.6 H1686.9V1424.1 H1688.9V1424.1 H1690.9V1312.0 H1692.9V1388.9 H1694.8V1405.3 H1696.8V1405.3 H1698.8V1440.0 H1700.8V1361.6 H1702.8V1349.9 H1704.7V1405.3 H1706.7V1405.3 H1708.7V1440.0 H1710.7V1361.6 H1712.7V1440.0 H1714.6V1374.5 H1716.6V1361.6 H1718.6V1349.9 H1720.6V1440.0 H1722.6V1388.9 H1724.5V1405.3 H1726.5V1405.3 H1728.5V1440.0 H1730.5V1440.0 H1732.5V1349.9 H1734.5V1374.5 H1736.4V1388.9 H1738.4V1339.3 H1740.4V1424.1 H1742.4V1361.6 H1744.4V1440.0 H1746.3V1374.5 H1748.3V1304.1 H1750.3V1424.1 H1752.3V1424.1 H1754.3V1361.6 H1756.2V1349.9 H1758.2V1361.6 H1760.2V1440.0 H1762.2V1374.5 H1764.2V1361.6 H1766.1V1440.0 H1768.1V1424.1 H1770.1V1405.3 H1772.1V1424.1 H1774.1V1361.6 H1776.0V1388.9 H1778.0V1312.0 H1780.0V1312.0 H1782.0V1405.3 H1784.0V1320.4 H1785.9V1361.6 H1787.9V1405.3 H1789.9V1374.5 H1791.9V1388.9 H1793.9V1424.1 H1795.9V1339.3 H1797.8V1388.9 H1799.8V1312.0 H1801.8V1349.9 H1803.8V1424.1 H1805.8V1349.9 H1807.7V1289.6 H1809.7V1440.0 H1811.7V1424.1 H1813.7V1405.3 H1815.7V1329.5 H1817.6V1361.6 H1819.6V1249.4 H1821.6V1388.9 H1823.6V1424.1 H1825.6V1388.9 H1827.5V1424.1 H1829.5V1405.3 H1831.5V1361.6 H1833.5V1329.5 H1835.5V1339.3 H1837.4V1320.4 H1839.4V1440.0 H1841.4V1440.0 H1843.4V1361.6 H1845.4V1440.0 H1847.4V1405.3 H1849.3V1440.0 H1851.3V1440.0 H1853.3V1405.3 H1855.3V1424.1 H1857.3V1440.0 H1859.2V1440.0 H1861.2V1440.0 H1863.2V1424.1 H1865.2V1440.0 H1867.2V1424.1 H1869.1V1424.1 H1871.1V1440.0 H1873.1V1440.0 H1875.1V1424.1 H1877.1V1440.0 H1879.0V1440.0 H1881.0V1388.9 H1883.0V1388.9 H1885.0V1440.0 H1887.0V1440.0 H1888.9V1440.0 H1890.9V1405.3 H1892.9V1440.0 H1894.9V1440.0 H1896.9V1440.0 H1898.9V1440.0 H1900.8V1440.0 H1902.8V1440.0 H1904.8V1440.0 H1906.8V1424.1 H1908.8V1405.3 H1910.7V1424.1 H1912.7V1374.5 H1914.7V1405.3 H1916.7V1440.0 H1918.7V1405.3 H1920.6V1440.0 H1922.6V1440.0 H1924.6V1440.0 H1926.6V1440.0 H1928.6V1405.3 H1930.5V1440.0 H1931.8" stroke="#4444b8"/></g><rect x="546" y="299.6" width="1385.8" height="1140.4" fill="none" stroke="#000" stroke-width="2.2"/><path d="M546 1424.1H565.7M546 1405.3H565.7M546 1388.9H565.7M546 1374.5H565.7M546 1361.6H587.7M546 1276.7H565.7M546 1227.1H565.7M546 1191.9H565.7M546 1164.6H565.7M546 1142.2H565.7M546 1123.4H565.7M546 1107.0H565.7M546 1092.6H565.7M546 1079.7H587.7M546 994.8H565.7M546 945.2H565.7M546 910.0H565.7M546 882.7H565.7M546 860.3H565.7M546 841.5H565.7M546 825.1H565.7M546 810.7H565.7M546 797.8H587.7M546 712.9H565.7M546 663.3H565.7M546 628.1H565.7M546 600.8H565.7M546 578.4H565.7M546 559.6H565.7M546 543.2H565.7M546 528.8H565.7M546 515.9H587.7M546 431.0H565.7M546 381.4H565.7M546 346.2H565.7M546 318.9H565.7M567.2 1440V1422.5M600.2 1440V1422.5M633.2 1440V1422.5M666.2 1440V1406.0M699.2 1440V1422.5M732.2 1440V1422.5M765.2 1440V1422.5M798.2 1440V1406.0M831.3 1440V1422.5M864.3 1440V1422.5M897.3 1440V1422.5M930.3 1440V1406.0M963.3 1440V1422.5M996.3 1440V1422.5M1029.3 1440V1422.5M1062.3 1440V1406.0M1095.4 1440V1422.5M1128.4 1440V1422.5M1161.4 1440V1422.5M1194.4 1440V1406.0M1227.4 1440V1422.5M1260.4 1440V1422.5M1293.4 1440V1422.5M1326.5 1440V1406.0M1359.5 1440V1422.5M1392.5 1440V1422.5M1425.5 1440V1422.5M1458.5 1440V1406.0M1491.5 1440V1422.5M1524.5 1440V1422.5M1557.5 1440V1422.5M1590.6 1440V1406.0M1623.6 1440V1422.5M1656.6 1440V1422.5M1689.6 1440V1422.5M1722.6 1440V1406.0M1755.6 1440V1422.5M1788.6 1440V1422.5M1821.6 1440V1422.5M1854.7 1440V1406.0M1887.7 1440V1422.5M1920.7 1440V1422.5" stroke="#000" stroke-width="2.2" fill="none"/></svg>
<div class="t" style="left:666.2px;transform:translateX(-50%);top:1442.9px;font-size:46px;color:#000;font-weight:normal;-webkit-text-stroke:0.6px #000;">800</div>
<div class="t" style="left:798.2px;transform:translateX(-50%);top:1442.9px;font-size:46px;color:#000;font-weight:normal;-webkit-text-stroke:0.6px #000;">1000</div>
<div class="t" style="left:930.3px;transform:translateX(-50%);top:1442.9px;font-size:46px;color:#000;font-weight:normal;-webkit-text-stroke:0.6px #000;">1200</div>
<div class="t" style="left:1062.3px;transform:translateX(-50%);top:1442.9px;font-size:46px;color:#000;font-weight:normal;-webkit-text-stroke:0.6px #000;">1400</div>
<div class="t" style="left:1194.4px;transform:translateX(-50%);top:1442.9px;font-size:46px;color:#000;font-weight:normal;-webkit-text-stroke:0.6px #000;">1600</div>
<div class="t" style="left:1326.5px;transform:translateX(-50%);top:1442.9px;font-size:46px;color:#000;font-weight:normal;-webkit-text-stroke:0.6px #000;">1800</div>
<div class="t" style="left:1458.5px;transform:translateX(-50%);top:1442.9px;font-size:46px;color:#000;font-weight:normal;-webkit-text-stroke:0.6px #000;">2000</div>
<div class="t" style="left:1590.6px;transform:translateX(-50%);top:1442.9px;font-size:46px;color:#000;font-weight:normal;-webkit-text-stroke:0.6px #000;">2200</div>
<div class="t" style="left:1722.6px;transform:translateX(-50%);top:1442.9px;font-size:46px;color:#000;font-weight:normal;-webkit-text-stroke:0.6px #000;">2400</div>
<div class="t" style="left:1854.7px;transform:translateX(-50%);top:1442.9px;font-size:46px;color:#000;font-weight:normal;-webkit-text-stroke:0.6px #000;">2600</div>
<div class="t" style="right:2365.0px;top:494.3px;font-size:46px;color:#000;font-weight:normal;letter-spacing:-2px;-webkit-text-stroke:0.6px #000;">10</div>
<div class="t" style="left:519.0px;top:489.7px;font-size:29px;color:#000;font-weight:normal;-webkit-text-stroke:0.4px #000;">4</div>
<div class="t" style="right:2365.0px;top:776.2px;font-size:46px;color:#000;font-weight:normal;letter-spacing:-2px;-webkit-text-stroke:0.6px #000;">10</div>
<div class="t" style="left:519.0px;top:771.6px;font-size:29px;color:#000;font-weight:normal;-webkit-text-stroke:0.4px #000;">3</div>
<div class="t" style="right:2365.0px;top:1058.1px;font-size:46px;color:#000;font-weight:normal;letter-spacing:-2px;-webkit-text-stroke:0.6px #000;">10</div>
<div class="t" style="left:519.0px;top:1053.5px;font-size:29px;color:#000;font-weight:normal;-webkit-text-stroke:0.4px #000;">2</div>
<div class="t" style="right:2350.0px;top:1334.0px;font-size:46px;color:#000;font-weight:normal;letter-spacing:-2px;-webkit-text-stroke:0.6px #000;">10</div>
<div class="t" style="left:1240.0px;transform:translateX(-50%);top:168.9px;font-size:62px;color:#000;font-weight:normal;-webkit-text-stroke:0.8px #000;">hcal_6</div>
<div class="a" style="left:1724px;top:250px;width:349px;height:228px;background:#fff;border:2px solid #000;"></div>
<div class="a" style="left:1724px;top:307px;width:349px;height:2px;background:#000;"></div>
<div class="t" style="left:1898.0px;transform:translateX(-50%);top:253.0px;font-size:47px;color:#000;font-weight:normal;-webkit-text-stroke:0.6px #000;">hcal_6</div>
<div class="t" style="left:1743.0px;top:315.5px;font-size:37px;color:#000;font-weight:normal;-webkit-text-stroke:0.5px #000;">Entries</div>
<div class="t" style="right:827.0px;top:315.5px;font-size:37px;color:#000;font-weight:normal;-webkit-text-stroke:0.5px #000;">116870</div>
<div class="t" style="left:1743.0px;top:372.5px;font-size:37px;color:#000;font-weight:normal;-webkit-text-stroke:0.5px #000;">Mean</div>
<div class="t" style="right:827.0px;top:372.5px;font-size:37px;color:#000;font-weight:normal;-webkit-text-stroke:0.5px #000;">1503</div>
<div class="t" style="left:1743.0px;top:430.5px;font-size:37px;color:#000;font-weight:normal;-webkit-text-stroke:0.5px #000;">Std Dev</div>
<div class="t" style="right:827.0px;top:430.5px;font-size:37px;color:#000;font-weight:normal;-webkit-text-stroke:0.5px #000;">310.1</div>
<div class="a" style="left:0px;top:0px;width:2880px;height:50px;background:#0b0b0b;"></div>
<svg style="left:38px;top:6px" width="32" height="36" viewBox="0 0 170 200"><path fill="#fff" d="M150.4 155.6c-2.8 6.5-6.1 12.5-9.9 18-5.2 7.5-9.5 12.6-12.7 15.5-5.1 4.7-10.5 7.1-16.3 7.2-4.2 0-9.2-1.2-15.1-3.6-5.9-2.4-11.3-3.6-16.3-3.6-5.2 0-10.8 1.2-16.8 3.6-6 2.4-10.8 3.7-14.5 3.8-5.6.2-11.1-2.2-16.6-7.4-3.5-3.1-8-8.3-13.3-15.8-5.7-8-10.4-17.3-14.1-27.9C-.5 134.4-2.5 123.3-2.5 112.6c0-12.3 2.7-22.9 8-31.7 4.2-7.1 9.8-12.8 16.7-16.9 7-4.2 14.5-6.3 22.6-6.4 4.4 0 10.2 1.4 17.5 4.1 7.2 2.7 11.9 4.1 13.9 4.1 1.5 0 6.6-1.6 15.3-4.8 8.2-3 15.1-4.2 20.8-3.7 15.4 1.2 26.9 7.3 34.6 18.2-13.8 8.4-20.6 20.1-20.5 35.2.1 11.7 4.4 21.5 12.8 29.3 3.8 3.6 8.1 6.4 12.8 8.4-1 3-2.1 5.8-3.3 8.6zM118.8 3.6c0 9.2-3.4 17.8-10.1 25.7-8.1 9.5-18 14.9-28.6 14.1-.1-1.1-.2-2.3-.2-3.5 0-8.8 3.8-18.3 10.6-26 3.4-3.9 7.7-7.1 12.9-9.7 5.2-2.5 10.1-3.9 14.7-4.2.1 1.2.2 2.4.2 3.6z"/></svg>
<div class="t" style="left:109.0px;top:8.0px;font-size:26px;color:#fff;font-weight:bold;">root.exe</div>
<div class="t" style="left:257.0px;top:8.0px;font-size:26px;color:#fff;font-weight:normal;">Window</div>
<div class="t" style="left:394.5px;top:8.0px;font-size:26px;color:#fff;font-weight:normal;">Help</div>
<div class="a" style="left:1402px;top:0px;width:61px;height:47px;background:#f4ad42;border-radius:0 0 8px 8px;"></div>
<svg style="left:1420px;top:8px" width="26" height="32" viewBox="0 0 26 32"><rect x="8" y="1" width="10" height="18" rx="5" fill="#fff"/><path d="M3 13c0 6 4.5 10 10 10s10-4 10-10" stroke="#fff" stroke-width="2.4" fill="none" stroke-linecap="round"/><path d="M13 23v6M7 30h12" stroke="#fff" stroke-width="2.4" stroke-linecap="round"/></svg>
<svg style="left:1488px;top:8px" width="33" height="33" viewBox="0 0 33 33"><circle cx="16.5" cy="16.5" r="16" fill="#2a63d6"/><text x="16.5" y="21.5" font-size="15" font-family="Liberation Sans" fill="#fff" text-anchor="middle" font-weight="bold">zm</text></svg>
<svg style="left:1552px;top:10px" width="40" height="30" viewBox="0 0 40 30"><rect x="2" y="9" width="14" height="14" rx="2" fill="none" stroke="#fff" stroke-width="2.4"/><text x="9" y="20.5" font-size="12" font-family="Liberation Sans" font-weight="bold" fill="#fff" text-anchor="middle">T</text><circle cx="20" cy="6" r="4" fill="none" stroke="#fff" stroke-width="2"/><circle cx="29" cy="5" r="3" fill="none" stroke="#fff" stroke-width="2"/><path d="M16 12h12v8a6 6 0 0 1-12 0" fill="none" stroke="#fff" stroke-width="2"/><circle cx="29" cy="22" r="7.5" fill="#3aa84a"/><path d="M25.5 22l2.5 2.5 4.5-5" stroke="#fff" stroke-width="2" fill="none"/></svg>
<svg style="left:1630px;top:13px" width="33" height="22" viewBox="0 0 33 22"><rect x="1.2" y="1.2" width="30.6" height="19.6" rx="5" fill="none" stroke="#fff" stroke-width="2.4"/><circle cx="18.5" cy="11" r="4.5" fill="none" stroke="#fff" stroke-width="2.2"/><path d="M6 11h4" stroke="#fff" stroke-width="2.2"/></svg>
<svg style="left:1708px;top:7px" width="30" height="35" viewBox="0 0 30 35"><path d="M15 1L28 5v14c0 7-6 12-13 15C8 31 2 26 2 19V5z" fill="#d8d8d8"/><path d="M7 8h16M7 14h16M7 20h16M7 26h16M11 6v24M19 6v24" stroke="#0b0b0b" stroke-width="2.2"/></svg>
<svg style="left:1780px;top:10px" width="37" height="29" viewBox="0 0 37 29"><rect x="0" y="0" width="37" height="29" rx="6" fill="#e0e0e0"/><path d="M6 7v15M10 7v15M14 7v15M18 7v15M22 7v15M26 7v15M30 7v15" stroke="#0b0b0b" stroke-width="2"/></svg>
<svg style="left:1854px;top:10px" width="40" height="28" viewBox="0 0 40 28"><path d="M2 9h6l8-7v24l-8-7H2z" fill="#fff"/><path d="M22 8c2 3 2 9 0 12M27 5c3.5 5 3.5 13 0 18M32 2c5 7 5 17 0 24" stroke="#fff" stroke-width="2.4" fill="none" stroke-linecap="round"/></svg>
<svg style="left:1933px;top:9px" width="20" height="31" viewBox="0 0 20 31"><path d="M3 8l13 14-7 7V2l7 7L3 23" stroke="#fff" stroke-width="2.4" fill="none" stroke-linejoin="round" stroke-linecap="round"/></svg>
<div class="a" style="left:1998px;top:8px;width:44px;height:32px;background:#ececec;border-radius:5px;"></div>
<div class="t" style="left:2010.0px;top:11.5px;font-size:26px;color:#0b0b0b;font-weight:bold;">A</div>
<div class="t" style="left:2053.0px;top:11.2px;font-size:23px;color:#e8e8e8;font-weight:normal;-webkit-text-stroke:0.5px #e8e8e8;">ABC – Extended</div>
<svg style="left:2256px;top:11px" width="54" height="27" viewBox="0 0 54 27"><rect x="1.5" y="1.5" width="45" height="24" rx="6" fill="none" stroke="#bdbdbd" stroke-width="2.6"/><rect x="49" y="9" width="3" height="9" rx="1.5" fill="#bdbdbd"/><rect x="5" y="5" width="38" height="17" rx="3" fill="#cfcfcf"/><path d="M27 3l-9 12h7l-3 10 11-13h-7z" fill="#0b0b0b" stroke="#0b0b0b" stroke-width="1.5"/><path d="M26 5l-6 9h6l-2 7 7-9h-6z" fill="#fff"/></svg>
<svg style="left:2345px;top:11px" width="37" height="27" viewBox="0 0 37 27"><path d="M2 9a24 24 0 0 1 33 0" stroke="#fff" stroke-width="3.2" fill="none" stroke-linecap="round"/><path d="M7.5 14.5a16 16 0 0 1 22 0" stroke="#fff" stroke-width="3.2" fill="none" stroke-linecap="round"/><path d="M13 20a8 8 0 0 1 11 0" stroke="#fff" stroke-width="3.2" fill="none" stroke-linecap="round"/><circle cx="18.5" cy="24.5" r="2.2" fill="#fff"/></svg>
<svg style="left:2419px;top:9px" width="31" height="31" viewBox="0 0 31 31"><circle cx="15.5" cy="15.5" r="13.5" fill="none" stroke="#fff" stroke-width="2.6"/><circle cx="15.5" cy="12" r="5" fill="#fff"/><path d="M7 24c2-5 15-5 17 0" fill="#fff"/></svg>
<svg style="left:2485px;top:10px" width="29" height="29" viewBox="0 0 29 29"><circle cx="12" cy="12" r="9" fill="none" stroke="#fff" stroke-width="2.8"/><path d="M18.5 18.5l8 8" stroke="#fff" stroke-width="3" stroke-linecap="round"/></svg>
<svg style="left:2540px;top:10px" width="52" height="29" viewBox="0 0 52 29"><rect x="1.5" y="1.5" width="27" height="11" rx="5.5" fill="none" stroke="#fff" stroke-width="2.6"/><circle cx="22.5" cy="7" r="3.5" fill="#fff"/><rect x="1.5" y="16" width="27" height="11" rx="5.5" fill="#fff"/><circle cx="8" cy="21.5" r="3.5" fill="#0b0b0b"/><circle cx="44" cy="15" r="4" fill="#e8913a"/></svg>
<div class="t" style="left:2616.5px;top:7.6px;font-size:27px;color:#e8e8e8;font-weight:normal;">Thu 18 Sep</div>
<div class="t" style="left:2772.0px;top:7.6px;font-size:27px;color:#e8e8e8;font-weight:normal;">12:27</div>
<div class="a" style="left:94px;top:1688px;width:2691px;height:101px;background:linear-gradient(90deg,rgba(150,170,180,0.35),rgba(160,170,165,0.0) 60%,rgba(165,175,172,0.3)),linear-gradient(180deg,#94a1a7 0%,#9eacb2 50%,#a6b4ba 100%);border-radius:22px;box-shadow:inset 0 0 0 1px rgba(255,255,255,0.28), 0 0 0 1px rgba(0,0,0,0.12);"></div>
<svg style="left:110px;top:1704px" width="64" height="64" viewBox="0 0 64 64"><defs><linearGradient id="gf" x1="0" y1="0" x2="0" y2="1"><stop offset="0" stop-color="#6ac8f7"/><stop offset="1" stop-color="#2a7bea"/></linearGradient></defs><rect x="0" y="0" width="64" height="64" rx="14" fill="url(#gf)" /><path d="M34 0H50a14 14 0 0 1 14 14V50a14 14 0 0 1-14 14H40c-2-8-3-16-3-24h-6c0-14 1-28 3-40z" fill="#e9ecf3"/><path d="M18 21v5M47 21v5" stroke="#222" stroke-width="2.6" stroke-linecap="round"/><path d="M12 42c10 8 30 8 40 0" stroke="#222" stroke-width="2.4" fill="none" stroke-linecap="round"/></svg>
<svg style="left:194px;top:1704px" width="64" height="64" viewBox="0 0 64 64"><rect x="1" y="1" width="62" height="62" rx="13" fill="#c8ccd0"/><rect x="3" y="3" width="58" height="58" rx="12" fill="#000"/><rect x="7" y="7" width="50" height="50" rx="8" fill="#2b2b2b"/><path d="M14 14l7 4-7 4" stroke="#fff" stroke-width="2.2" fill="none"/><path d="M23 25h8" stroke="#fff" stroke-width="2.2"/></svg>
<svg style="left:278px;top:1704px" width="64" height="64" viewBox="0 0 64 64"><defs><linearGradient id="ga" x1="0" y1="0" x2="0" y2="1"><stop offset="0" stop-color="#4fb3f2"/><stop offset="1" stop-color="#2167d8"/></linearGradient></defs><rect x="0" y="0" width="64" height="64" rx="14" fill="url(#ga)" /><path d="M29 13L48 50M38 13L22 38M19.5 42L16 48.5M11 39H54" stroke="#fff" stroke-width="5" stroke-linecap="round" fill="none"/></svg>
<div class="a" style="left:322px;top:1696px;width:30px;height:30px;border-radius:50%;background:#e5483c;"></div>
<div class="t" style="left:337.0px;transform:translateX(-50%);top:1702.8px;font-size:19px;color:#fff;font-weight:normal;">6</div>
<svg style="left:362px;top:1704px" width="64" height="64" viewBox="0 0 64 64"><rect x="0" y="0" width="64" height="64" rx="14" fill="#f6f6f6"/><path d="M0 14a14 14 0 0 1 14-14h36a14 14 0 0 1 14 14v6H0z" fill="#ea5a4e"/><text x="32" y="16" font-size="13" font-family="Liberation Sans" font-weight="bold" fill="#fff" text-anchor="middle">SEP</text><text x="32" y="55" font-size="35" font-family="Liberation Sans" fill="#222" text-anchor="middle">18</text></svg>
<svg style="left:446px;top:1704px" width="64" height="64" viewBox="0 0 64 64"><rect x="0" y="0" width="64" height="64" rx="14" fill="#e3e6ea"/><rect x="11" y="11" width="12" height="12" rx="3" fill="#5bd24a"/><rect x="27" y="11" width="12" height="12" rx="3" fill="#f7c531"/><rect x="43" y="11" width="12" height="12" rx="3" fill="#f2913a"/><rect x="11" y="27" width="12" height="12" rx="3" fill="#d83a2e"/><rect x="27" y="27" width="12" height="12" rx="3" fill="#a7abb0"/><rect x="43" y="27" width="12" height="12" rx="3" fill="#ec4c63"/><rect x="11" y="43" width="12" height="12" rx="3" fill="#a04fe0"/><rect x="27" y="43" width="12" height="12" rx="3" fill="#2e8ef0"/><rect x="43" y="43" width="12" height="12" rx="3" fill="#46d3a2"/></svg>
<svg style="left:530px;top:1704px" width="64" height="64" viewBox="0 0 64 64"><defs><linearGradient id="gz" x1="0" y1="0" x2="0" y2="1"><stop offset="0" stop-color="#2f6ff0"/><stop offset="1" stop-color="#1d4fd8"/></linearGradient></defs><rect x="0" y="0" width="64" height="64" rx="14" fill="url(#gz)" /><text x="32" y="38" font-size="17" font-family="Liberation Sans" font-weight="bold" fill="#fff" text-anchor="middle">zoom</text></svg>
<svg style="left:614px;top:1704px" width="64" height="64" viewBox="0 0 64 64"><rect x="0" y="0" width="64" height="64" rx="14" fill="#ffffff" /><circle cx="22" cy="18" r="11" fill="#3a9ee8"/><circle cx="44" cy="46" r="11" fill="#2a78d0"/><circle cx="33" cy="32" r="21" fill="#3b8fe0"/><text x="33" y="44" font-size="33" font-family="Liberation Sans" font-weight="bold" fill="#fff" text-anchor="middle">S</text></svg>
<svg style="left:698px;top:1704px" width="64" height="64" viewBox="0 0 64 64"><rect x="0" y="0" width="64" height="64" rx="14" fill="#ffffff" /><rect x="21" y="8" width="35" height="36" rx="3" fill="#59c7ef"/><circle cx="26" cy="42" r="17" fill="#ef7a4f"/><path d="M12 43c4-10 7-14 10-10s1 10 5 8 6-14 9-11 1 10 5 9 5-5 9-7" stroke="#1f3b66" stroke-width="3" fill="none" stroke-linecap="round"/></svg>
<svg style="left:782px;top:1704px" width="64" height="64" viewBox="0 0 64 64"><rect x="0" y="0" width="64" height="64" rx="14" fill="#ffffff" /><path d="M13 13h10l28 38H13z" fill="#e8485d"/><path d="M25 13h26v38h-10z" fill="#e8485d"/><path d="M17 13l34 38" stroke="#fff" stroke-width="5"/></svg>
<svg style="left:866px;top:1704px" width="64" height="64" viewBox="0 0 64 64"><rect x="0" y="0" width="64" height="64" rx="14" fill="#f7f7f7" /><circle cx="32" cy="32" r="26" fill="#2e86e8"/><circle cx="32" cy="32" r="23" fill="none" stroke="#fff" stroke-width="1.5" stroke-dasharray="1 2.5" opacity="0.8"/><path d="M48 16L35 35 29 29z" fill="#ee3b3b"/><path d="M16 48L29 29 35 35z" fill="#fff"/></svg>
<svg style="left:950px;top:1704px" width="64" height="64" viewBox="0 0 64 64"><rect x="0" y="0" width="64" height="64" rx="12" fill="#b68b55"/><rect x="58" y="14" width="6" height="10" fill="#d8d8d8"/><rect x="58" y="26" width="6" height="10" fill="#5ab0e6"/><rect x="58" y="38" width="6" height="10" fill="#f09a3a"/><circle cx="31" cy="32" r="20" fill="none" stroke="#8c6a3f" stroke-width="2"/><circle cx="31" cy="27" r="7" fill="#8c6a3f"/><path d="M18 46c4-8 22-8 26 0" fill="#8c6a3f"/></svg>
<svg style="left:1034px;top:1704px" width="64" height="64" viewBox="0 0 64 64"><rect x="0" y="0" width="64" height="64" rx="14" fill="#f3f1ec"/><path d="M0 14a14 14 0 0 1 14-14h36a14 14 0 0 1 14 14v4H0z" fill="#f7cf45"/><path d="M0 32h64M0 46h64" stroke="#dcdad5" stroke-width="1.2"/></svg>
<svg style="left:1118px;top:1704px" width="64" height="64" viewBox="0 0 64 64"><rect x="0" y="0" width="64" height="64" rx="14" fill="#fbfbfa" /><circle cx="12" cy="16" r="5" fill="#2f7ff0"/><circle cx="12" cy="32" r="5" fill="#e44a3c"/><circle cx="12" cy="48" r="5" fill="#ef9a2f"/><path d="M24 16h32M24 32h32M24 48h32" stroke="#c8c8c8" stroke-width="1.5"/></svg>
<svg style="left:1202px;top:1704px" width="64" height="64" viewBox="0 0 64 64"><rect x="0" y="0" width="64" height="64" rx="14" fill="#1d1440" /><circle cx="32" cy="36" r="22" fill="#f27b2a"/><path d="M12 34a22 22 0 0 0 42 6c2-14-6-28-18-30 6 6 4 14-2 16" fill="#f7a93a"/><circle cx="30" cy="36" r="11" fill="#7d3be2"/><path d="M10 38c4 14 20 20 34 14" stroke="#e8386b" stroke-width="4" fill="none"/></svg>
<svg style="left:1286px;top:1704px" width="64" height="64" viewBox="0 0 64 64"><defs><linearGradient id="gm" x1="0" y1="0" x2="0" y2="1"><stop offset="0" stop-color="#f35f6f"/><stop offset="1" stop-color="#e5384a"/></linearGradient></defs><rect x="0" y="0" width="64" height="64" rx="14" fill="url(#gm)" /><path d="M26 18l20-5v30" stroke="#fff" stroke-width="4" fill="none"/><path d="M26 18v30" stroke="#fff" stroke-width="4"/><ellipse cx="21" cy="48" rx="6" ry="5" fill="#fff"/><ellipse cx="41" cy="43" rx="6" ry="5" fill="#fff"/></svg>
<svg style="left:1355px;top:1690px" width="90" height="90" viewBox="0 0 90 90"><g stroke-linejoin="miter"><path d="M15.2 24.1L20.5 24.1L40.5 42.6L47 36L50 44L47 49.4L65.2 69L65.2 74.4L58.9 74.4L40.5 58.9L36.9 58.9L36.9 67.6L28.6 67.6L21.1 74.4L15.2 74.4L15.2 69L33.6 49.7L15.2 29.8Z" fill="#000" stroke="#000" stroke-width="15"/><circle cx="60.7" cy="30" r="15.8" fill="#000" stroke="#000" stroke-width="15"/><path d="M15.2 24.1L20.5 24.1L40.5 42.6L47 36L50 44L47 49.4L65.2 69L65.2 74.4L58.9 74.4L40.5 58.9L36.9 58.9L36.9 67.6L28.6 67.6L21.1 74.4L15.2 74.4L15.2 69L33.6 49.7L15.2 29.8Z" fill="#fff" stroke="#fff" stroke-width="8"/><circle cx="60.7" cy="30" r="15.8" fill="#fff" stroke="#fff" stroke-width="8"/><path d="M15.2 24.1L20.5 24.1L40.5 42.6L47 36L50 44L47 49.4L65.2 69L65.2 74.4L58.9 74.4L40.5 58.9L36.9 58.9L36.9 67.6L28.6 67.6L21.1 74.4L15.2 74.4L15.2 69L33.6 49.7L15.2 29.8Z" fill="#4f8a3a"/><circle cx="60.7" cy="30" r="15.8" fill="#65a348"/><circle cx="65.2" cy="27.4" r="6.5" fill="#000"/><circle cx="65.2" cy="27.4" r="5" fill="#fff"/></g></svg>
<svg style="left:1454px;top:1704px" width="64" height="64" viewBox="0 0 64 64"><rect x="0" y="0" width="64" height="64" rx="14" fill="#ffffff" /><rect x="18" y="10" width="36" height="44" rx="3" fill="#21a366"/><rect x="36" y="10" width="18" height="15" fill="#33c481"/><rect x="18" y="39" width="36" height="15" fill="#185c37"/><rect x="8" y="20" width="25" height="25" rx="3" fill="#107c41"/><text x="20.5" y="39" font-size="17" font-family="Liberation Sans" font-weight="bold" fill="#fff" text-anchor="middle">X</text></svg>
<svg style="left:1538px;top:1704px" width="64" height="64" viewBox="0 0 64 64"><defs><linearGradient id="gml" x1="0" y1="0" x2="0" y2="1"><stop offset="0" stop-color="#3f8ef3"/><stop offset="1" stop-color="#5fc0f8"/></linearGradient></defs><rect x="0" y="0" width="64" height="64" rx="14" fill="url(#gml)" /><rect x="10" y="18" width="44" height="30" rx="3" fill="#f2f2f2"/><path d="M10 19l22 17 22-17" stroke="#c9c9c9" stroke-width="1.8" fill="none"/></svg>
<svg style="left:1622px;top:1704px" width="64" height="64" viewBox="0 0 64 64"><rect x="0" y="0" width="64" height="64" rx="14" fill="#ffffff" /><circle cx="36" cy="32" r="22" fill="#ed6c47"/><path d="M36 10a22 22 0 0 1 22 22H36z" fill="#ff8f6b"/><path d="M36 32h22a22 22 0 0 1-22 22z" fill="#d35230"/><rect x="8" y="20" width="25" height="25" rx="3" fill="#c43e1c"/><text x="20.5" y="39" font-size="17" font-family="Liberation Sans" font-weight="bold" fill="#fff" text-anchor="middle">P</text></svg>
<svg style="left:1706px;top:1704px" width="64" height="64" viewBox="0 0 64 64"><rect x="0" y="0" width="64" height="64" rx="14" fill="#ffffff" /><rect x="18" y="10" width="36" height="44" rx="3" fill="#2b7cd3"/><rect x="18" y="10" width="36" height="11" fill="#41a5ee"/><rect x="18" y="43" width="36" height="11" fill="#185abd"/><rect x="8" y="20" width="25" height="25" rx="3" fill="#185abd"/><text x="20.5" y="39" font-size="16" font-family="Liberation Sans" font-weight="bold" fill="#fff" text-anchor="middle">W</text></svg>
<svg style="left:1790px;top:1704px" width="64" height="64" viewBox="0 0 64 64"><defs><linearGradient id="gs" x1="0" y1="0" x2="0" y2="1"><stop offset="0" stop-color="#d5d8db"/><stop offset="1" stop-color="#8e9196"/></linearGradient></defs><rect x="0" y="0" width="64" height="64" rx="14" fill="url(#gs)" /><circle cx="32" cy="32" r="24" fill="#3d3d3f"/><circle cx="32" cy="32" r="26" fill="none" stroke="#5a5a5c" stroke-width="3" stroke-dasharray="2 2"/><circle cx="32" cy="32" r="17" fill="#6b6b6e"/><circle cx="32" cy="32" r="13" fill="#4a4a4c"/><path d="M32 32V17M32 32l13 8M32 32l-13 8" stroke="#9a9a9c" stroke-width="3"/></svg>
<div class="a" style="left:1834px;top:1696px;width:30px;height:30px;border-radius:50%;background:#e5483c;"></div>
<div class="t" style="left:1849.0px;transform:translateX(-50%);top:1702.8px;font-size:19px;color:#fff;font-weight:normal;">1</div>
<div class="a" style="left:1884px;top:1702px;width:2px;height:74px;background:rgba(70,80,85,0.55);"></div>
<svg style="left:1912px;top:1704px" width="64" height="64" viewBox="0 0 64 64"><rect x="0" y="0" width="64" height="64" rx="14" fill="#ffffff" /><circle cx="44" cy="18" r="6" fill="#5059c9"/><rect x="38" y="26" width="14" height="18" rx="5" fill="#5059c9"/><circle cx="32" cy="15" r="8" fill="#7b83eb"/><rect x="22" y="26" width="22" height="26" rx="9" fill="#7b83eb"/><rect x="7" y="19" width="25" height="25" rx="3" fill="#4b53bc"/><text x="19.5" y="38" font-size="16" font-family="Liberation Sans" font-weight="bold" fill="#fff" text-anchor="middle">T</text></svg>
<svg style="left:1996px;top:1704px" width="64" height="64" viewBox="0 0 64 64"><rect x="0" y="0" width="64" height="64" rx="14" fill="#ad1f15" /><path d="M32 12c-6 0-2 16 6 26s18 10 17 6-14-4-28 2-16 10-13 10 10-14 14-26 8-18 4-18z" stroke="#fff" stroke-width="3" fill="none" stroke-linejoin="round"/></svg>
<svg style="left:2080px;top:1699px" width="72" height="72" viewBox="0 0 64 64"><defs><linearGradient id="gt" x1="0" y1="0" x2="0" y2="1"><stop offset="0" stop-color="#a8b8c0"/><stop offset="1" stop-color="#4e6a74"/></linearGradient></defs><circle cx="32" cy="32" r="33" fill="#e8e8e8"/><circle cx="32" cy="32" r="31" fill="url(#gt)"/><text x="32" y="40" font-size="22" font-family="Liberation Serif" font-weight="bold" fill="#f2f2f2" text-anchor="middle">TEX</text></svg>
<svg style="left:2164px;top:1704px" width="64" height="64" viewBox="0 0 64 64"><rect x="0" y="0" width="64" height="64" rx="14" fill="#d0d0d0" /><rect x="14" y="8" width="36" height="48" rx="5" fill="#222"/><rect x="18" y="12" width="28" height="8" rx="1" fill="#555"/><circle cx="21" cy="28" r="3.2" fill="#ddd"/><circle cx="31" cy="28" r="3.2" fill="#ddd"/><circle cx="41" cy="28" r="3.2" fill="#f09a2e"/><circle cx="21" cy="38" r="3.2" fill="#ddd"/><circle cx="31" cy="38" r="3.2" fill="#ddd"/><circle cx="41" cy="38" r="3.2" fill="#f09a2e"/><rect x="17" y="45" width="16" height="6" rx="3" fill="#ddd"/><circle cx="41" cy="48" r="3.2" fill="#f09a2e"/></svg>
<svg style="left:2248px;top:1704px" width="64" height="64" viewBox="0 0 64 64"><rect x="0" y="5" width="64" height="59" rx="13" fill="#ffffff"/><path d="M0 14h64" stroke="#c9c9c9" stroke-width="1"/><path d="M0 22h64" stroke="#c9c9c9" stroke-width="1"/><path d="M0 30h64" stroke="#c9c9c9" stroke-width="1"/><path d="M0 38h64" stroke="#c9c9c9" stroke-width="1"/><path d="M0 46h64" stroke="#c9c9c9" stroke-width="1"/><path d="M0 54h64" stroke="#c9c9c9" stroke-width="1"/><path d="M11 5v59" stroke="#f0a0a0" stroke-width="1"/><path d="M58 0L24 60" stroke="#8aa8c8" stroke-width="5"/><path d="M24 60l-2 4" stroke="#333" stroke-width="2"/></svg>
<svg style="left:2332px;top:1698px" width="72" height="72" viewBox="0 0 64 64"><g transform="rotate(-8 32 34)"><rect x="6" y="8" width="52" height="56" rx="3" fill="#d8d8d8"/><rect x="9" y="11" width="46" height="50" fill="#fafafa"/><path d="M9 11h46v11H9z" fill="#f4c24a"/><rect x="20" y="4" width="24" height="8" rx="2" fill="#777"/><path d="M14 44l8-8 6 6 10-12 6 4" stroke="#3fb13f" stroke-width="1.6" fill="none"/><path d="M14 36l8-6 8 6 8-12 8 4" stroke="#7c6af0" stroke-width="1.6" fill="none"/><path d="M14 52l8-6 8 4 8-8" stroke="#f08a2a" stroke-width="1.6" fill="none"/><path d="M44 38l10 18H34z" fill="#ccc"/><path d="M44 44v6" stroke="#333" stroke-width="2"/></g></svg>
<div class="a" style="left:2408px;top:1695px;width:80px;height:80px;border-radius:50%;background:#fff;"></div>
<svg style="left:2408px;top:1695px" width="80" height="80" viewBox="0 0 80 80"><path d="M3 56l21-11 7 21 10-49h34" stroke="#5bc8e0" stroke-width="4" fill="none" stroke-linejoin="round"/></svg>
<div class="a" style="left:2508px;top:1702px;width:2px;height:74px;background:rgba(70,80,85,0.55);"></div>
<svg style="left:2544px;top:1697px" width="52" height="76" viewBox="0 0 52 76"><path d="M2 2h32l16 16v56H2z" fill="#f4f4f4" stroke="#d0d0d0" stroke-width="1"/><path d="M34 2v16h16" fill="#e0e0e0" stroke="#c8c8c8"/><path d="M8 6h12M8 9h10" stroke="#888" stroke-width="1"/></svg>
<svg style="left:2616px;top:1713px" width="78" height="60" viewBox="0 0 78 60"><rect x="0" y="0" width="76" height="44" fill="#fff" stroke="#cfcfcf"/><path d="M3 4h70" stroke="#bbb" stroke-width="2"/><path d="M12 12h40M12 16h44M12 20h36M12 26h42M12 30h30M12 36h40" stroke="#aaa" stroke-width="1"/><rect x="50" y="34" width="26" height="25" rx="5" fill="#fff"/><rect x="53" y="37" width="20" height="19" rx="2" fill="#2b7cd3"/><text x="60" y="51" font-size="10" font-family="Liberation Sans" font-weight="bold" fill="#fff" text-anchor="middle">W</text></svg>
<svg style="left:2706px;top:1696px" width="64" height="78" viewBox="0 0 64 78"><path d="M4 14h56l-6 60H10z" fill="#e6e8ea" stroke="#c8cacc" stroke-width="1"/><ellipse cx="32" cy="14" rx="28" ry="7" fill="#d4d6d8"/><path d="M14 12l6-8 8 6 6-9 8 7 8-4 4 8" stroke="#777" stroke-width="2" fill="#aaa"/><path d="M22 9l6 3M40 6l4 6" stroke="#3aa0e0" stroke-width="3"/></svg>
<div class="a" style="left:138px;top:1778px;width:8px;height:8px;border-radius:50%;background:#22343d;"></div>
<div class="a" style="left:222px;top:1778px;width:8px;height:8px;border-radius:50%;background:#22343d;"></div>
<div class="a" style="left:558px;top:1778px;width:8px;height:8px;border-radius:50%;background:#22343d;"></div>
<div class="a" style="left:810px;top:1778px;width:8px;height:8px;border-radius:50%;background:#22343d;"></div>
<div class="a" style="left:894px;top:1778px;width:8px;height:8px;border-radius:50%;background:#22343d;"></div>
<div class="a" style="left:1230px;top:1778px;width:8px;height:8px;border-radius:50%;background:#22343d;"></div>
<div class="a" style="left:1482px;top:1778px;width:8px;height:8px;border-radius:50%;background:#22343d;"></div>
<div class="a" style="left:1566px;top:1778px;width:8px;height:8px;border-radius:50%;background:#22343d;"></div>
<div class="a" style="left:1650px;top:1778px;width:8px;height:8px;border-radius:50%;background:#22343d;"></div>
<div class="a" style="left:1734px;top:1778px;width:8px;height:8px;border-radius:50%;background:#22343d;"></div>
<div class="a" style="left:1818px;top:1778px;width:8px;height:8px;border-radius:50%;background:#22343d;"></div>
<div class="a" style="left:1940px;top:1778px;width:8px;height:8px;border-radius:50%;background:#22343d;"></div>
<div class="a" style="left:2024px;top:1778px;width:8px;height:8px;border-radius:50%;background:#22343d;"></div>
<div class="a" style="left:2108px;top:1778px;width:8px;height:8px;border-radius:50%;background:#22343d;"></div>
<div class="a" style="left:2192px;top:1778px;width:8px;height:8px;border-radius:50%;background:#22343d;"></div>
<div class="a" style="left:2276px;top:1778px;width:8px;height:8px;border-radius:50%;background:#22343d;"></div>
<div class="a" style="left:2360px;top:1778px;width:8px;height:8px;border-radius:50%;background:#22343d;"></div>
<div class="a" style="left:2444px;top:1778px;width:8px;height:8px;border-radius:50%;background:#22343d;"></div>
</body></html>
